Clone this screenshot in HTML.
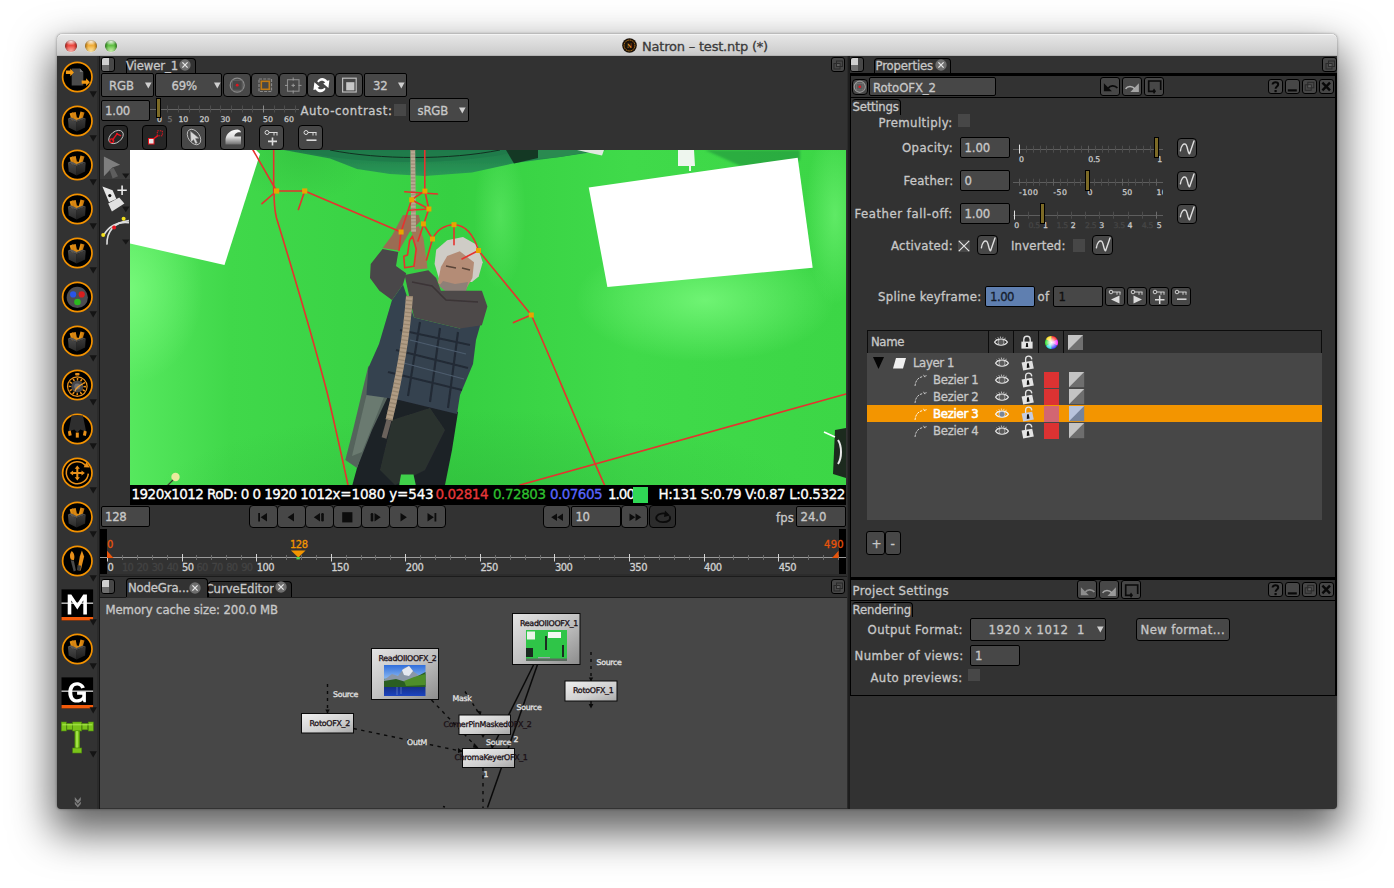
<!DOCTYPE html>
<html><head><meta charset="utf-8"><title>Natron - test.ntp (*)</title>
<style>
html,body{margin:0;padding:0;}
body{width:1394px;height:888px;overflow:hidden;background:#fff;position:relative;font-family:"DejaVu Sans Condensed","DejaVu Sans","Liberation Sans",sans-serif;font-stretch:condensed;font-size:13px;}
div,svg,span.t{position:absolute;}
span.t{white-space:pre;line-height:normal;-webkit-text-stroke:0.3px;}
svg{overflow:visible;}
.btn{background:#474747;border:1px solid #000;box-sizing:border-box;border-radius:3px;}
.btnd{background:#262626;border:1px solid #000;box-sizing:border-box;border-radius:3px;}
.fld{background:#474747;border:1px solid #000;box-sizing:border-box;border-radius:2px;}
.chk{background:#474747;}

</style></head>
<body>
<div style="left:57px;top:34px;width:1280px;height:775px;background:#323232;border-radius:5px 5px 4px 4px;box-shadow:0 19px 40px 5px rgba(0,0,0,0.62),0 0 3px rgba(0,0,0,0.4);"></div>
<div style="left:57px;top:34px;width:1280px;height:22px;background:linear-gradient(#e8e8e8 0%,#dfdfdf 30%,#d2d2d2 75%,#c8c8c8 100%);border-radius:5px 5px 0 0;border-bottom:1px solid #b4b4b4;box-sizing:border-box;box-shadow:inset 0 1px 0 #f4f4f4;"></div>
<div style="left:64.5px;top:39.6px;width:12px;height:12px;border-radius:6px;background:radial-gradient(ellipse 70% 45% at 50% 92%,#ffb0a8 0%,rgba(255,255,255,0) 100%),radial-gradient(ellipse 55% 30% at 50% 14%,rgba(255,255,255,0.85) 0%,rgba(255,255,255,0) 100%),radial-gradient(circle closest-side at 50% 50%,#ec4a42 0%,#ec4a42 50%,#b8322c 82%,#7e1f1c 100%);box-shadow:0 0.5px 0.5px rgba(255,255,255,0.6);"></div>
<div style="left:84.5px;top:39.6px;width:12px;height:12px;border-radius:6px;background:radial-gradient(ellipse 70% 45% at 50% 92%,#ffe7a0 0%,rgba(255,255,255,0) 100%),radial-gradient(ellipse 55% 30% at 50% 14%,rgba(255,255,255,0.85) 0%,rgba(255,255,255,0) 100%),radial-gradient(circle closest-side at 50% 50%,#f0ae3c 0%,#f0ae3c 50%,#c08422 82%,#8a5c14 100%);box-shadow:0 0.5px 0.5px rgba(255,255,255,0.6);"></div>
<div style="left:104.5px;top:39.6px;width:12px;height:12px;border-radius:6px;background:radial-gradient(ellipse 70% 45% at 50% 92%,#c8f2a8 0%,rgba(255,255,255,0) 100%),radial-gradient(ellipse 55% 30% at 50% 14%,rgba(255,255,255,0.85) 0%,rgba(255,255,255,0) 100%),radial-gradient(circle closest-side at 50% 50%,#62c046 0%,#62c046 50%,#3f922c 82%,#2a661c 100%);box-shadow:0 0.5px 0.5px rgba(255,255,255,0.6);"></div>
<svg style="left:622px;top:38px;" width="15" height="15" viewBox="0 0 15 15"><circle cx="7.5" cy="7.5" r="7.3" fill="#1a1008"/><circle cx="7.5" cy="7.5" r="5.4" fill="none" stroke="#c8821e" stroke-width="1" stroke-dasharray="1.2 0.6"/><text x="7.5" y="9.6" font-size="6" font-weight="bold" text-anchor="middle" fill="#e0942a" font-family="DejaVu Serif,Liberation Serif,serif">N</text></svg>
<span class="t" style="left:642px;top:38.60px;font-size:13px;color:#3a3a3a;font-family:'DejaVu Sans','Liberation Sans',sans-serif;font-stretch:normal;letter-spacing:-0.204px;">Natron – test.ntp (*)</span>
<div style="left:97px;top:56px;width:2px;height:753px;background:#2b2b2b;"></div>
<div style="left:99px;top:56px;width:1px;height:753px;background:#161616;"></div>
<div style="left:847px;top:56px;width:1px;height:753px;background:#2a2a2a;"></div>
<div style="left:848px;top:56px;width:1px;height:753px;background:#1e1e1e;"></div>
<div style="left:849px;top:56px;width:1px;height:753px;background:#1c1c1c;"></div>
<div style="left:101px;top:57px;width:14px;height:15.0px;background:#474747;border:1px solid #000;box-sizing:border-box;border-radius:3px;overflow:hidden;"><div style="left:0;top:0;width:6.5px;height:6.5px;background:#cfcfcf"></div><div style="left:0;top:6.5px;width:6.5px;height:7px;background:#6e6e6e"></div></div>
<div style="left:125.5px;top:57.5px;width:70.0px;height:16.5px;background:#323232;border:1px solid #000;border-bottom:none;box-sizing:border-box;border-radius:4px 4px 0 0;"></div>
<span class="t" style="left:126px;top:58.00px;font-size:13px;color:#c8c8c8;letter-spacing:-0.127px;">Viewer_1</span>
<svg style="left:179px;top:59px;" width="12" height="12" viewBox="0 0 12 12"><circle cx="6" cy="6" r="5.7" fill="#6e6e6e"/><path d="M3.4 3.4L8.6 8.6M8.6 3.4L3.4 8.6" stroke="#e6e6e6" stroke-width="1.3" fill="none"/></svg>
<div style="left:831px;top:57px;width:14px;height:15px;background:#474747;border:1px solid #000;box-sizing:border-box;border-radius:3px;"></div>
<svg style="left:831px;top:57.5px;" width="14" height="14" viewBox="0 0 14 14"><rect x="5.5" y="3" width="6" height="5.5" fill="none" stroke="#2a2a2a" stroke-width="1"/><rect x="3" y="5.5" width="6" height="5.5" fill="none" stroke="#2a2a2a" stroke-width="1"/><rect x="6" y="6" width="2.5" height="2" fill="#5e5e5e"/></svg>
<div style="left:101px;top:73px;width:53px;height:24px;background:#474747;border:1px solid #000;box-sizing:border-box;border-radius:2px;"></div>
<span class="t" style="left:109px;top:78.30px;font-size:13px;color:#c8c8c8;letter-spacing:-0.073px;">RGB</span>
<svg style="left:145px;top:82.3px;" width="7" height="7" viewBox="0 0 7 7"><path d="M0 0.5H6.6L3.3 6.4Z" fill="#d0d0d0"/></svg>
<div style="left:155px;top:73px;width:67px;height:24px;background:#474747;border:1px solid #000;box-sizing:border-box;border-radius:2px;"></div>
<span class="t" style="left:171.5px;top:78.30px;font-size:13px;color:#c8c8c8;letter-spacing:-0.167px;">69%</span>
<svg style="left:214px;top:82.3px;" width="7" height="7" viewBox="0 0 7 7"><path d="M0 0.5H6.6L3.3 6.4Z" fill="#d0d0d0"/></svg>
<div class="btn" style="left:223px;top:73px;width:28px;height:24px;border-radius:4px;"></div>
<div class="btn" style="left:251px;top:73px;width:28px;height:24px;border-radius:4px;"></div>
<div class="btn" style="left:279px;top:73px;width:28px;height:24px;border-radius:4px;"></div>
<div class="btn" style="left:307px;top:73px;width:28px;height:24px;border-radius:4px;"></div>
<div class="btn" style="left:335px;top:73px;width:28px;height:24px;border-radius:4px;"></div>
<div style="left:364px;top:73px;width:43px;height:24px;background:#474747;border:1px solid #000;box-sizing:border-box;border-radius:2px;"></div>
<span class="t" style="left:373px;top:78.30px;font-size:13px;color:#c8c8c8;letter-spacing:-0.195px;">32</span>
<svg style="left:398px;top:82.3px;" width="7" height="7" viewBox="0 0 7 7"><path d="M0 0.5H6.6L3.3 6.4Z" fill="#d0d0d0"/></svg>
<svg style="left:223.5px;top:73.8px;" width="26.5" height="22.5" viewBox="0 0 26.5 22.5"><circle cx="13.2" cy="11.2" r="7" fill="none" stroke="#8c8c8c" stroke-width="1.2"/><rect x="8.2" y="6.2" width="10" height="10" fill="none" stroke="#6a6a6a" stroke-width="0.8"/><circle cx="13.2" cy="11.2" r="1.4" fill="#e0141e"/></svg>
<svg style="left:251.5px;top:73.8px;" width="26.5" height="22.5" viewBox="0 0 26.5 22.5"><rect x="7" y="5" width="12.5" height="12.5" fill="none" stroke="#8a8a8a" stroke-width="1.2" stroke-dasharray="3 1.2"/><rect x="9.3" y="7.3" width="8" height="8" fill="none" stroke="#c27a12" stroke-width="1.6"/></svg>
<svg style="left:279.5px;top:73.8px;" width="26.5" height="22.5" viewBox="0 0 26.5 22.5"><rect x="7.5" y="5.7" width="11.5" height="11.5" fill="none" stroke="#8a8a8a" stroke-width="1.1"/><path d="M13.2 3.5V6.5M13.2 16.5V19.5M5 11.4H8M18.5 11.4H21.5M11.5 11.4H15M13.2 9.7V13.1" stroke="#9a9a9a" stroke-width="1" fill="none"/></svg>
<svg style="left:307.8px;top:73.8px;" width="26.5" height="22.5" viewBox="0 0 26.5 22.5"><g fill="#fff"><path id="rfa" d="M9.2 7.4C10.8 3.4 16.2 2.4 19.2 6.8L21.4 6.2L20.4 13.9L15.2 9.4L17.2 8.5C15.4 6.3 12.6 6.3 10.4 8.4Z"/><use href="#rfa" transform="rotate(180 13.4 11.1)"/></g></svg>
<svg style="left:335.8px;top:73.8px;" width="26.5" height="22.5" viewBox="0 0 26.5 22.5"><rect x="6.6" y="4.2" width="13.6" height="13.8" fill="none" stroke="#bdbdbd" stroke-width="1.2"/><rect x="10.2" y="8.2" width="8.2" height="8.2" fill="#c8c8c8"/></svg>
<div class="fld" style="left:101px;top:100px;width:49px;height:21px;"></div>
<span class="t" style="left:105px;top:103.00px;font-size:13px;color:#c8c8c8;letter-spacing:-0.262px;">1.00</span>
<div style="left:150px;top:109px;width:149px;height:1px;background:#666;"></div>
<svg style="left:0px;top:0px;pointer-events:none;" width="1394" height="888" viewBox="0 0 1394 888"><rect x="157" y="105.5" width="1" height="7.0" fill="#4c4c4c"/><rect x="167" y="105.5" width="1" height="7.0" fill="#4c4c4c"/><rect x="178" y="105.5" width="1" height="7.0" fill="#4c4c4c"/><rect x="189" y="105.5" width="1" height="7.0" fill="#4c4c4c"/><rect x="199" y="105.5" width="1" height="7.0" fill="#4c4c4c"/><rect x="210" y="105.5" width="1" height="7.0" fill="#4c4c4c"/><rect x="220" y="105.5" width="1" height="7.0" fill="#4c4c4c"/><rect x="231" y="105.5" width="1" height="7.0" fill="#4c4c4c"/><rect x="242" y="105.5" width="1" height="7.0" fill="#4c4c4c"/><rect x="252" y="105.5" width="1" height="7.0" fill="#4c4c4c"/><rect x="263" y="105.5" width="1" height="7.0" fill="#8a8a8a"/><rect x="274" y="105.5" width="1" height="7.0" fill="#4c4c4c"/><rect x="284" y="105.5" width="1" height="7.0" fill="#4c4c4c"/><rect x="295" y="105.5" width="1" height="7.0" fill="#4c4c4c"/></svg>
<span class="t" style="left:157px;top:114.90px;font-size:7.8px;color:#c8c8c8;font-family:'DejaVu Sans','Liberation Sans',sans-serif;font-stretch:normal;letter-spacing:-1.469px;">0</span>
<span class="t" style="left:167.5px;top:114.90px;font-size:7.8px;color:#6f6f6f;font-family:'DejaVu Sans','Liberation Sans',sans-serif;font-stretch:normal;letter-spacing:-1.469px;">5</span>
<span class="t" style="left:178.5px;top:114.90px;font-size:7.8px;color:#c8c8c8;font-family:'DejaVu Sans','Liberation Sans',sans-serif;font-stretch:normal;letter-spacing:-0.211px;">10</span>
<span class="t" style="left:199.5px;top:114.90px;font-size:7.8px;color:#c8c8c8;font-family:'DejaVu Sans','Liberation Sans',sans-serif;font-stretch:normal;letter-spacing:-0.211px;">20</span>
<span class="t" style="left:220.5px;top:114.90px;font-size:7.8px;color:#c8c8c8;font-family:'DejaVu Sans','Liberation Sans',sans-serif;font-stretch:normal;letter-spacing:-0.211px;">30</span>
<span class="t" style="left:242px;top:114.90px;font-size:7.8px;color:#c8c8c8;font-family:'DejaVu Sans','Liberation Sans',sans-serif;font-stretch:normal;letter-spacing:0.039px;">40</span>
<span class="t" style="left:263px;top:114.90px;font-size:7.8px;color:#c8c8c8;font-family:'DejaVu Sans','Liberation Sans',sans-serif;font-stretch:normal;letter-spacing:0.039px;">50</span>
<span class="t" style="left:284px;top:114.90px;font-size:7.8px;color:#c8c8c8;font-family:'DejaVu Sans','Liberation Sans',sans-serif;font-stretch:normal;letter-spacing:0.039px;">60</span>
<div style="left:156px;top:98px;width:5px;height:20px;background:#7c6a26;border:1px solid #000;box-sizing:border-box;"></div>
<span class="t" style="left:300.5px;top:103.00px;font-size:13px;color:#c8c8c8;letter-spacing:0.586px;">Auto-contrast:</span>
<div style="left:394px;top:104px;width:12px;height:12px;background:#474747;"></div>
<div style="left:409px;top:98px;width:60px;height:24px;background:#474747;border:1px solid #000;box-sizing:border-box;border-radius:2px;"></div>
<span class="t" style="left:417.5px;top:102.80px;font-size:13px;color:#c8c8c8;letter-spacing:-0.203px;">sRGB</span>
<svg style="left:459px;top:106.8px;" width="7" height="7" viewBox="0 0 7 7"><path d="M0 0.5H6.6L3.3 6.4Z" fill="#d0d0d0"/></svg>
<div class="btnd" style="left:103px;top:125px;width:25px;height:25px;border-radius:4px;"></div>
<div class="btnd" style="left:142px;top:125px;width:25px;height:25px;border-radius:4px;"></div>
<div class="btn" style="left:181px;top:125px;width:25px;height:25px;border-radius:4px;"></div>
<div class="btn" style="left:220px;top:125px;width:25px;height:25px;border-radius:4px;"></div>
<div class="btn" style="left:259px;top:125px;width:25px;height:25px;border-radius:4px;"></div>
<div class="btn" style="left:298px;top:125px;width:25px;height:25px;border-radius:4px;"></div>
<svg style="left:103.5px;top:125px;" width="24" height="24.5" viewBox="0 0 24 24.5"><ellipse cx="12" cy="12" rx="8.2" ry="5.4" transform="rotate(-38 12 12)" fill="none" stroke="#c8c8c8" stroke-width="0.9"/><path d="M8.2 15.5L13 8.8L17 10.8" stroke="#e8141e" stroke-width="1.3" fill="none"/><circle cx="7.8" cy="15.8" r="1.9" fill="none" stroke="#e8141e" stroke-width="1.2"/><circle cx="13" cy="8.8" r="1" fill="#e8141e"/></svg>
<svg style="left:142.5px;top:125px;" width="24" height="24.5" viewBox="0 0 24 24.5"><rect x="5.5" y="13.5" width="5.5" height="5.5" fill="#e6e6e6" stroke="#e8141e" stroke-width="1"/><path d="M11 13.5L14.8 10.6" stroke="#e8141e" stroke-width="1.4"/><rect x="14.3" y="5.8" width="5" height="5" fill="none" stroke="#e8141e" stroke-width="1" stroke-dasharray="1.5 1"/></svg>
<svg style="left:181.5px;top:125px;" width="24" height="24.5" viewBox="0 0 24 24.5"><ellipse cx="12" cy="12" rx="8.6" ry="5.6" transform="rotate(55 12 12)" fill="none" stroke="#bdbdbd" stroke-width="0.9"/><path d="M8.4 6.2L17 13.2L13.4 13.6L15.4 18L13.6 18.8L11.6 14.6L9 17Z" fill="#d8d8d8" stroke="#8a8a8a" stroke-width="0.5"/></svg>
<svg style="left:220.5px;top:125px;" width="24" height="24.5" viewBox="0 0 24 24.5"><defs><linearGradient id="wv" x1="0" y1="0" x2="0" y2="1"><stop offset="0" stop-color="#fafafa"/><stop offset="0.5" stop-color="#dedede"/><stop offset="1" stop-color="#6e6e6e"/></linearGradient></defs><path d="M4.5 19.5V14C5.5 8.5 10 4.6 16.5 4.6C19 5.2 20 6.4 20 7.4C16.5 6.6 13.4 8.6 13.4 11.4C14.4 11.6 17 11.4 20 11.4V19.5Z" fill="url(#wv)"/></svg>
<svg style="left:259.5px;top:125px;" width="24" height="24.5" viewBox="0 0 24 24.5"><circle cx="7" cy="7.5" r="2" fill="none" stroke="#dcdcdc" stroke-width="1"/><path d="M9 7.5H17.5M14 7.5V10.5M17 7.5V10.5" stroke="#dcdcdc" stroke-width="1" fill="none"/><path d="M8 16.4H17M12.5 12.6V20.4" stroke="#dcdcdc" stroke-width="1.6" fill="none"/></svg>
<svg style="left:298.5px;top:125px;" width="24" height="24.5" viewBox="0 0 24 24.5"><circle cx="7" cy="7.5" r="2" fill="none" stroke="#dcdcdc" stroke-width="1"/><path d="M9 7.5H17.5M14 7.5V10.5M17 7.5V10.5" stroke="#dcdcdc" stroke-width="1" fill="none"/><path d="M7.5 15.2H17.5" stroke="#dcdcdc" stroke-width="1.6" fill="none"/></svg>
<div style="left:100px;top:150px;width:30px;height:29px;background:#3d3d3d;"></div>
<svg style="left:0px;top:0px;" width="1394" height="888" viewBox="0 0 1394 888"><path d="M103.9 156.6L120.2 164.8L112.4 167.4L103.9 176.3Z" fill="#7e7e7e"/><path d="M109.6 169.6L113.6 167.8L118 176.2L112.6 178.6Z" fill="#5e5e5e"/>
<path d="M122.1 173.4H129.5L125.8 178.6Z" fill="#161616"/>
<path d="M102.4 186.4L112.6 190.2L116.4 199L109 202.2Z" fill="#e6e6e6"/><circle cx="109.8" cy="195.6" r="1.6" fill="#111"/><path d="M108.2 203.6L119.2 197.6L124.4 203.6L111.9 211.6Z" fill="#e0e0e0"/>
<path d="M117.4 190.2H126.8M122.1 185.5V194.9" stroke="#ececec" stroke-width="1.6" fill="none"/>
<path d="M122.1 206.4H129.5L125.8 212.2Z" fill="#161616"/>
<path d="M103.6 235.6C108 227 117 221 129 222.6" stroke="#dedede" stroke-width="1.6" fill="none"/><path d="M107 244.6C106.4 232 114 222 129 220.6" stroke="#dedede" stroke-width="1.6" fill="none"/>
<circle cx="123.6" cy="218.8" r="2" fill="#f3e11e"/><circle cx="103.2" cy="235" r="2" fill="#f3e11e"/><circle cx="114.1" cy="227.6" r="2" fill="#e8141e"/>
<path d="M122.1 239.4H129.5L125.8 244.6Z" fill="#161616"/></svg>
<svg style="left:0px;top:0px;" width="1394" height="888" viewBox="0 0 1394 888"><defs>
<clipPath id="phc"><rect x="130" y="150" width="716" height="335"/></clipPath>
<linearGradient id="gbase" x1="0" y1="0" x2="1" y2="0"><stop offset="0" stop-color="#56e85e"/><stop offset="0.14" stop-color="#40d84a"/><stop offset="0.45" stop-color="#36d042"/><stop offset="0.7" stop-color="#40da4a"/><stop offset="1" stop-color="#3cd646"/></linearGradient>
<radialGradient id="gglow" cx="0.5" cy="0.5" r="0.5"><stop offset="0" stop-color="#84ff86" stop-opacity="0.7"/><stop offset="1" stop-color="#84ff86" stop-opacity="0"/></radialGradient>
<radialGradient id="gdark" cx="0.5" cy="0.5" r="0.5"><stop offset="0" stop-color="#2cb03a" stop-opacity="0.45"/><stop offset="1" stop-color="#2cb03a" stop-opacity="0"/></radialGradient>
<linearGradient id="canopy" x1="0" y1="0" x2="0" y2="1"><stop offset="0" stop-color="#1f7a4a"/><stop offset="1" stop-color="#2a9a56"/></linearGradient>
<filter id="bl2"><feGaussianBlur stdDeviation="1.2"/></filter>
<filter id="bl1"><feGaussianBlur stdDeviation="0.6"/></filter>
</defs>
<g clip-path="url(#phc)">
<rect x="130" y="150" width="716" height="335" fill="url(#gbase)"/>
<ellipse cx="705" cy="300" rx="130" ry="62" fill="url(#gglow)"/>
<ellipse cx="128" cy="290" rx="75" ry="95" fill="url(#gglow)"/>
<ellipse cx="480" cy="500" rx="330" ry="90" fill="url(#gdark)"/>
<ellipse cx="500" cy="215" rx="26" ry="75" fill="url(#gglow)" opacity="0.45"/>
<ellipse cx="300" cy="148" rx="75" ry="55" fill="url(#gdark)" opacity="0.9"/>
<!-- canopy -->
<path d="M284 150L330 158.5L357 169L390 174L425 176L472 172.5L515 163L560 157L606 150Z" fill="url(#canopy)" filter="url(#bl1)"/>
<path d="M300 150C350 166 470 166 520 150Z" fill="#1f7a4a" opacity="0.85"/>
<path d="M330 150C380 160 450 160 500 150" fill="none" stroke="#10281c" stroke-width="0.9"/>
<path d="M506 150L540 150L538 158L514 163.5Z" fill="#143824"/>
<path d="M538 150H600L560 157L538 159Z" fill="#2a8a50"/>
<path d="M577 150L604 150L602 155.5L590 153Z" fill="#dfe9df"/>
<path d="M705 150H800V160L745 168Z" fill="#1f8a3a" opacity="0.55" filter="url(#bl2)"/>
<ellipse cx="835" cy="215" rx="30" ry="90" fill="url(#gglow)" opacity="0.7"/>
<!-- white boards -->
<path d="M130 150H256L260 154L224.5 265L130 243.5Z" fill="#fff"/>
<path d="M588.7 187.4L797.7 157.8L812.7 267.8L607.4 287Z" fill="#fff"/>
<path d="M678 150H694L695 166H691V171H689V166H678Z" fill="#eef6ee"/>
<!-- right bottom dark object -->
<path d="M835 430L846 428V478L833 474Z" fill="#1c2a1e"/><path d="M824 432L835 437" stroke="#fff" stroke-width="1.6"/><path d="M838 440C842 446 842 458 838 464" stroke="#e8e8e8" stroke-width="2" fill="none"/>
<circle cx="175.5" cy="477" r="4.2" fill="#e9ea9c"/><path d="M165 488L173 480" stroke="#3a3a2a" stroke-width="1.2"/>
<!-- man -->
<g filter="url(#bl1)">
<!-- trousers / legs -->
<path d="M372 392L395 396L458 412L452 450L444 490H351L357 468L366 440Z" fill="#1d2128"/>
<path d="M392 420L430 408L445 430L425 470L395 485L380 470Z" fill="#2c332f"/>
<!-- coat flap -->
<path d="M368.3 366L391 390L372 430L357 468L345.3 460L353 430Z" fill="#55645c"/>
<path d="M372 372L386 392L362 452L352 456Z" fill="#6a7a70"/>
<!-- plaid shirt -->
<path d="M392 300L403 284.4L414 317.5L459.8 328.5L484 312L476 340L473 364L460 395L457 414L395 399L366.4 395L368.3 368L379 344Z" fill="#36424f"/>
<path d="M400 330L470 345M396 350L468 368M388 372L462 390M420 322L408 396M440 328L430 402M458 332L448 408" stroke="#222b36" stroke-width="2.2" fill="none"/>
<path d="M410 340L466 354M400 362L464 379" stroke="#4d5d6e" stroke-width="1.2" fill="none"/>
<!-- left sleeve -->
<path d="M382.6 248.9L398.3 252L396 266L406.2 273.3L403 284.4L392 300.1L379.4 290.7L370 278L370.7 263.9Z" fill="#4a4648"/>
<!-- left forearm -->
<path d="M403 215H418.8L420.4 221.3L409.4 232.3L399.1 250.5L382.6 248.1L392 235.5Z" fill="#9a6c52"/>
<!-- right forearm / hand -->
<path d="M410.9 229.2L418.8 226L423.5 238.6L427.5 268.6L414.1 269.4L415.7 246.5Z" fill="#a47458"/>
<!-- head -->
<path d="M434.6 263.9L436.2 249.7L447.2 240.2L463 237.1L477.1 245L482.7 262.3L478.7 276.5L472 282L440 282Z" fill="#cfccc6"/>
<path d="M440.9 267L447.2 256L459.8 251.3L474 262.3L472.4 278L466.1 289.1L447.2 290.7L437.7 282.8Z" fill="#b48c76"/>
<path d="M443 281L455 284L468 282L466.1 291L447.2 292.5L439 286Z" fill="#8e8078"/>
<path d="M446 266L456 268M462 268L470 270" stroke="#5a4438" stroke-width="1.3"/>
<!-- right sleeve across -->
<path d="M404.6 274.9L428.3 270.2L436.2 278L440.9 290.7L481.9 290.7L487.4 306.4L481.9 325.3L459.8 328.5L414.1 317.5L409.4 297Z" fill="#4e484a"/>
<path d="M412 282L432 286L446 300L478 302" stroke="#3a3436" stroke-width="1.6" fill="none"/>
</g>
<!-- rope -->
<path d="M412.8 150L413.6 232" stroke="#b9a892" stroke-width="4.8" fill="none"/>
<path d="M412.8 150L413.6 232" stroke="#8d7c68" stroke-width="4.8" fill="none" stroke-dasharray="1.2 2.2" opacity="0.6"/>
<path d="M409.5 296C407 330 400 375 389 420" stroke="#b09c84" stroke-width="7" fill="none"/>
<path d="M409.5 296C407 330 400 375 389 420" stroke="#85745f" stroke-width="7" fill="none" stroke-dasharray="1.4 2.6" opacity="0.55"/>
<path d="M389 420L384 438" stroke="#6a625c" stroke-width="5" fill="none"/>
<path d="M401 474.5L413.5 474.5L416 486H399Z" fill="#3fd04a"/>
<!-- roto splines -->
<g stroke="#e6322e" stroke-width="1.6" fill="none" stroke-linecap="round" stroke-linejoin="round">
<path d="M253 150L276.6 191"/><path d="M273.7 150V191"/><path d="M274 191C274 205 275 212 276.5 218C290 262 312 335 327 392C335 425 343 462 348 485"/>
<path d="M276.6 191H304.7"/><path d="M276.6 191L262 203.7"/><path d="M304.7 191L298.4 209.5"/>
<path d="M304.7 191L401 232"/><path d="M401 232L399 250.5"/><path d="M401 232L411.6 199.7"/>
<path d="M424.8 150V191"/><path d="M404.7 191.7L437.4 194"/><path d="M411.6 199.7L428.8 209"/><path d="M408.8 210.3L428.8 209"/><path d="M411.6 199.7L424.8 191L428.8 209L418 241"/>
<path d="M423.3 223.8L432.5 239L426.5 260"/>
<path d="M412.4 236.2L416.2 249L413.9 266.3L404.7 267.8L403.8 256.3L407.5 254.9L409.6 240.5Z"/>
<path d="M432.5 239C437 229 446 224.7 454 224.7C466 225 474 236 478.5 250.5"/><path d="M454 224.7V244.8"/><path d="M478.5 250.5L462 259"/>
<path d="M478.5 250.5L531.3 315"/><path d="M531.3 315L513.5 322.6"/><path d="M531.3 315C545 345 580 430 604.5 485"/>
<path d="M520 485L846 394"/>
</g>
<g fill="#e8a400">
<rect x="274" y="188.4" width="5.2" height="5.2"/><rect x="302.1" y="188.4" width="5.2" height="5.2"/><rect x="398.6" y="229.5" width="5" height="5"/><rect x="409.2" y="197.3" width="5" height="5"/><rect x="422.4" y="188.6" width="5" height="5"/><rect x="426.4" y="206.5" width="5" height="5"/><rect x="420.9" y="221.4" width="5" height="5"/><rect x="430" y="236.5" width="5" height="5"/><rect x="451.5" y="222.2" width="5" height="5"/><rect x="476" y="248" width="5" height="5"/><rect x="528.8" y="312.5" width="5" height="5"/>
</g>
</g></svg>
<div style="left:130px;top:485px;width:716px;height:20px;background:#000;"></div>
<span class="t" style="left:131.5px;top:486.40px;font-size:13.5px;color:#fff;font-family:'DejaVu Sans','Liberation Sans',sans-serif;font-stretch:normal;letter-spacing:-0.537px;">1920x1012 RoD: 0 0 1920 1012</span>
<span class="t" style="left:332.5px;top:486.40px;font-size:13.5px;color:#fff;font-family:'DejaVu Sans','Liberation Sans',sans-serif;font-stretch:normal;letter-spacing:-0.169px;">x=1080 y=543</span>
<span class="t" style="left:435.5px;top:486.40px;font-size:13.5px;color:#e8383a;font-family:'DejaVu Sans','Liberation Sans',sans-serif;font-stretch:normal;letter-spacing:-0.475px;">0.02814</span>
<span class="t" style="left:493px;top:486.40px;font-size:13.5px;color:#2fc02f;font-family:'DejaVu Sans','Liberation Sans',sans-serif;font-stretch:normal;letter-spacing:-0.475px;">0.72803</span>
<span class="t" style="left:550px;top:486.40px;font-size:13.5px;color:#5a66ff;font-family:'DejaVu Sans','Liberation Sans',sans-serif;font-stretch:normal;letter-spacing:-0.547px;">0.07605</span>
<span class="t" style="left:608px;top:486.40px;font-size:13.5px;color:#fff;font-family:'DejaVu Sans','Liberation Sans',sans-serif;font-stretch:normal;letter-spacing:-1.016px;">1.00</span>
<div style="left:633px;top:487px;width:15px;height:16px;background:#2fd855;"></div>
<span class="t" style="left:658.5px;top:486.40px;font-size:13.5px;color:#fff;font-family:'DejaVu Sans','Liberation Sans',sans-serif;font-stretch:normal;letter-spacing:-0.431px;">H:131 S:0.79 V:0.87 L:0.5322</span>
<div class="fld" style="left:101px;top:506px;width:49px;height:21px;"></div>
<span class="t" style="left:105px;top:509.00px;font-size:13px;color:#c8c8c8;letter-spacing:-0.276px;">128</span>
<div class="btn" style="left:249px;top:505px;width:29px;height:23px;border-radius:4px;"></div>
<div class="btn" style="left:277px;top:505px;width:29px;height:23px;border-radius:4px;"></div>
<div class="btn" style="left:305px;top:505px;width:29px;height:23px;border-radius:4px;"></div>
<div class="btn" style="left:333px;top:505px;width:29px;height:23px;border-radius:4px;"></div>
<div class="btn" style="left:361px;top:505px;width:29px;height:23px;border-radius:4px;"></div>
<div class="btn" style="left:389px;top:505px;width:29px;height:23px;border-radius:4px;"></div>
<div class="btn" style="left:417px;top:505px;width:29px;height:23px;border-radius:4px;"></div>
<svg style="left:250.1px;top:505.5px;" width="26.5" height="22.5" viewBox="0 0 26.5 22.5"><rect x="8.2" y="7" width="1.8" height="8.5" fill="#0c0c0c"/><path d="M17 7V15.5L10.6 11.25Z" fill="#0c0c0c"/></svg>
<svg style="left:278.1px;top:505.5px;" width="26.5" height="22.5" viewBox="0 0 26.5 22.5"><path d="M16 7V15.5L9.6 11.25Z" fill="#0c0c0c"/></svg>
<svg style="left:306.1px;top:505.5px;" width="26.5" height="22.5" viewBox="0 0 26.5 22.5"><path d="M14 7V15.5L7.8 11.25Z" fill="#0c0c0c"/><rect x="15.2" y="7" width="2.6" height="8.5" rx="1.2" fill="#0c0c0c"/></svg>
<svg style="left:334.1px;top:505.5px;" width="26.5" height="22.5" viewBox="0 0 26.5 22.5"><rect x="8.2" y="6.2" width="10.2" height="10.2" fill="#0c0c0c"/></svg>
<svg style="left:362.1px;top:505.5px;" width="26.5" height="22.5" viewBox="0 0 26.5 22.5"><path d="M12.5 7V15.5L18.7 11.25Z" fill="#0c0c0c"/><rect x="8.7" y="7" width="2.6" height="8.5" rx="1.2" fill="#0c0c0c"/></svg>
<svg style="left:390.1px;top:505.5px;" width="26.5" height="22.5" viewBox="0 0 26.5 22.5"><path d="M10.5 7V15.5L16.9 11.25Z" fill="#0c0c0c"/></svg>
<svg style="left:418.1px;top:505.5px;" width="26.5" height="22.5" viewBox="0 0 26.5 22.5"><rect x="16.5" y="7" width="1.8" height="8.5" fill="#0c0c0c"/><path d="M9.5 7V15.5L15.9 11.25Z" fill="#0c0c0c"/></svg>
<div class="btn" style="left:543px;top:505px;width:27px;height:23px;border-radius:4px;"></div>
<div class="fld" style="left:571px;top:506px;width:50px;height:21px;"></div>
<div class="btn" style="left:621px;top:505px;width:27px;height:23px;border-radius:4px;"></div>
<div style="left:649px;top:505px;width:27px;height:23px;background:#2c2c2c;border:1px solid #000;box-sizing:border-box;border-radius:4px;"></div>
<span class="t" style="left:575.5px;top:509.00px;font-size:13px;color:#c8c8c8;letter-spacing:-0.445px;">10</span>
<svg style="left:543.5px;top:505.5px;" width="26.5" height="22.5" viewBox="0 0 26.5 22.5"><path d="M13 7.5V15L7.2 11.25Z" fill="#0c0c0c"/><path d="M19 7.5V15L13.2 11.25Z" fill="#0c0c0c"/></svg>
<svg style="left:621.5px;top:505.5px;" width="26.5" height="22.5" viewBox="0 0 26.5 22.5"><path d="M7.5 7.5V15L13.3 11.25Z" fill="#0c0c0c"/><path d="M13.5 7.5V15L19.3 11.25Z" fill="#0c0c0c"/></svg>
<svg style="left:649.5px;top:505.5px;" width="26.5" height="22.5" viewBox="0 0 26.5 22.5"><path d="M17.5 8.6C14 6.6 8.5 7.2 6.6 10.4C5.2 13.4 8 16.2 13 16.2C18.4 16.2 21.4 13.6 19.6 10.2" stroke="#0a0a0a" stroke-width="1.8" fill="none"/><path d="M15 4.6L20 9.6L14 11Z" fill="#0a0a0a"/></svg>
<span class="t" style="left:776px;top:509.50px;font-size:13px;color:#c8c8c8;letter-spacing:0.120px;">fps</span>
<div class="fld" style="left:796px;top:506px;width:50px;height:21px;"></div>
<span class="t" style="left:800.5px;top:509.00px;font-size:13px;color:#c8c8c8;letter-spacing:-0.012px;">24.0</span>
<div style="left:100px;top:529px;width:7px;height:45px;background:#000;"></div>
<div style="left:839px;top:529px;width:7px;height:45px;background:#000;"></div>
<svg style="left:0px;top:0px;" width="1394" height="888" viewBox="0 0 1394 888"><rect x="100" y="557" width="746" height="1" fill="#9a9a9a"/><rect x="107" y="554" width="1" height="7.5" fill="#d4d4d4"/><rect x="122" y="555" width="1" height="5" fill="#6a6a6a"/><rect x="137" y="555" width="1" height="5" fill="#6a6a6a"/><rect x="152" y="555" width="1" height="5" fill="#6a6a6a"/><rect x="167" y="555" width="1" height="5" fill="#6a6a6a"/><rect x="182" y="554" width="1" height="7.5" fill="#d4d4d4"/><rect x="196" y="555" width="1" height="5" fill="#6a6a6a"/><rect x="211" y="555" width="1" height="5" fill="#6a6a6a"/><rect x="226" y="555" width="1" height="5" fill="#6a6a6a"/><rect x="241" y="555" width="1" height="5" fill="#6a6a6a"/><rect x="256" y="554" width="1" height="7.5" fill="#d4d4d4"/><rect x="271" y="555" width="1" height="5" fill="#6a6a6a"/><rect x="286" y="555" width="1" height="5" fill="#6a6a6a"/><rect x="301" y="555" width="1" height="5" fill="#6a6a6a"/><rect x="316" y="555" width="1" height="5" fill="#6a6a6a"/><rect x="331" y="554" width="1" height="7.5" fill="#d4d4d4"/><rect x="346" y="555" width="1" height="5" fill="#6a6a6a"/><rect x="361" y="555" width="1" height="5" fill="#6a6a6a"/><rect x="375" y="555" width="1" height="5" fill="#6a6a6a"/><rect x="390" y="555" width="1" height="5" fill="#6a6a6a"/><rect x="405" y="554" width="1" height="7.5" fill="#d4d4d4"/><rect x="420" y="555" width="1" height="5" fill="#6a6a6a"/><rect x="435" y="555" width="1" height="5" fill="#6a6a6a"/><rect x="450" y="555" width="1" height="5" fill="#6a6a6a"/><rect x="465" y="555" width="1" height="5" fill="#6a6a6a"/><rect x="480" y="554" width="1" height="7.5" fill="#d4d4d4"/><rect x="495" y="555" width="1" height="5" fill="#6a6a6a"/><rect x="510" y="555" width="1" height="5" fill="#6a6a6a"/><rect x="525" y="555" width="1" height="5" fill="#6a6a6a"/><rect x="540" y="555" width="1" height="5" fill="#6a6a6a"/><rect x="554" y="554" width="1" height="7.5" fill="#d4d4d4"/><rect x="569" y="555" width="1" height="5" fill="#6a6a6a"/><rect x="584" y="555" width="1" height="5" fill="#6a6a6a"/><rect x="599" y="555" width="1" height="5" fill="#6a6a6a"/><rect x="614" y="555" width="1" height="5" fill="#6a6a6a"/><rect x="629" y="554" width="1" height="7.5" fill="#d4d4d4"/><rect x="644" y="555" width="1" height="5" fill="#6a6a6a"/><rect x="659" y="555" width="1" height="5" fill="#6a6a6a"/><rect x="674" y="555" width="1" height="5" fill="#6a6a6a"/><rect x="689" y="555" width="1" height="5" fill="#6a6a6a"/><rect x="704" y="554" width="1" height="7.5" fill="#d4d4d4"/><rect x="719" y="555" width="1" height="5" fill="#6a6a6a"/><rect x="733" y="555" width="1" height="5" fill="#6a6a6a"/><rect x="748" y="555" width="1" height="5" fill="#6a6a6a"/><rect x="763" y="555" width="1" height="5" fill="#6a6a6a"/><rect x="778" y="554" width="1" height="7.5" fill="#d4d4d4"/><rect x="793" y="555" width="1" height="5" fill="#6a6a6a"/><rect x="808" y="555" width="1" height="5" fill="#6a6a6a"/><rect x="823" y="555" width="1" height="5" fill="#6a6a6a"/><rect x="838" y="555" width="1" height="5" fill="#6a6a6a"/><path d="M107 558V550.8L113.6 558Z" fill="#e8540a"/><path d="M838.6 558V550.8L832 558Z" fill="#e8540a"/><path d="M291 550.5H305.6L298.3 557.6Z" fill="#f39500"/><rect x="296.4" y="557" width="3.4" height="2.4" fill="#4fd04f"/></svg>
<span class="t" style="left:107px;top:537.50px;font-size:11px;color:#e8540a;letter-spacing:-1.297px;">0</span>
<span class="t" style="left:290px;top:537.50px;font-size:11px;color:#f39500;letter-spacing:-0.464px;">128</span>
<span class="t" style="left:824px;top:537.50px;font-size:11px;color:#e8540a;letter-spacing:0.370px;">490</span>
<span class="t" style="left:107.5px;top:561.00px;font-size:11px;color:#d0d0d0;letter-spacing:-0.797px;">0</span>
<span class="t" style="left:121.915px;top:561.00px;font-size:11px;color:#434343;letter-spacing:-0.797px;">10</span>
<span class="t" style="left:136.83px;top:561.00px;font-size:11px;color:#434343;letter-spacing:-0.797px;">20</span>
<span class="t" style="left:151.745px;top:561.00px;font-size:11px;color:#434343;letter-spacing:-0.797px;">30</span>
<span class="t" style="left:166.66px;top:561.00px;font-size:11px;color:#434343;letter-spacing:-0.797px;">40</span>
<span class="t" style="left:182.075px;top:561.00px;font-size:11px;color:#d0d0d0;letter-spacing:-0.547px;">50</span>
<span class="t" style="left:196.49px;top:561.00px;font-size:11px;color:#434343;letter-spacing:-0.797px;">60</span>
<span class="t" style="left:211.405px;top:561.00px;font-size:11px;color:#434343;letter-spacing:-0.797px;">70</span>
<span class="t" style="left:226.32px;top:561.00px;font-size:11px;color:#434343;letter-spacing:-0.797px;">80</span>
<span class="t" style="left:241.235px;top:561.00px;font-size:11px;color:#434343;letter-spacing:-0.797px;">90</span>
<span class="t" style="left:256.65px;top:561.00px;font-size:11px;color:#d0d0d0;letter-spacing:-0.464px;">100</span>
<span class="t" style="left:331.225px;top:561.00px;font-size:11px;color:#d0d0d0;letter-spacing:-0.464px;">150</span>
<span class="t" style="left:405.8px;top:561.00px;font-size:11px;color:#d0d0d0;letter-spacing:-0.464px;">200</span>
<span class="t" style="left:480.375px;top:561.00px;font-size:11px;color:#d0d0d0;letter-spacing:-0.464px;">250</span>
<span class="t" style="left:554.95px;top:561.00px;font-size:11px;color:#d0d0d0;letter-spacing:-0.464px;">300</span>
<span class="t" style="left:629.525px;top:561.00px;font-size:11px;color:#d0d0d0;letter-spacing:-0.464px;">350</span>
<span class="t" style="left:704.1px;top:561.00px;font-size:11px;color:#d0d0d0;letter-spacing:-0.464px;">400</span>
<span class="t" style="left:778.6750000000001px;top:561.00px;font-size:11px;color:#d0d0d0;letter-spacing:-0.464px;">450</span>
<div style="left:100px;top:574px;width:747px;height:2px;background:#2c2c2c;"></div>
<div style="left:100px;top:576px;width:747px;height:1px;background:#1c1c1c;"></div>
<div style="left:101px;top:579px;width:14px;height:15px;background:#474747;border:1px solid #000;box-sizing:border-box;border-radius:3px;overflow:hidden;"><div style="left:0;top:0;width:6.5px;height:6.5px;background:#cfcfcf"></div><div style="left:0;top:6.5px;width:6.5px;height:7px;background:#6e6e6e"></div></div>
<div style="left:125.5px;top:578px;width:82.5px;height:20px;background:#323232;border:1px solid #000;border-bottom:none;box-sizing:border-box;border-radius:4px 4px 0 0;"></div>
<div style="left:208px;top:580.5px;width:83.5px;height:17.5px;background:#2b2b2b;border:1px solid #000;border-bottom:none;box-sizing:border-box;border-radius:4px 4px 0 0;"></div>
<span class="t" style="left:128px;top:580.00px;font-size:13px;color:#c8c8c8;letter-spacing:-0.170px;">NodeGra...</span>
<svg style="left:189px;top:581.5px;" width="12" height="12" viewBox="0 0 12 12"><circle cx="6" cy="6" r="5.7" fill="#6e6e6e"/><path d="M3.4 3.4L8.6 8.6M8.6 3.4L3.4 8.6" stroke="#e6e6e6" stroke-width="1.3" fill="none"/></svg>
<span class="t" style="left:205.5px;top:581.00px;font-size:13px;color:#c8c8c8;letter-spacing:-0.057px;clip-path:inset(0 0 0 3px);">CurveEditor</span>
<svg style="left:275px;top:581px;" width="12" height="12" viewBox="0 0 12 12"><circle cx="6" cy="6" r="5.7" fill="#6e6e6e"/><path d="M3.4 3.4L8.6 8.6M8.6 3.4L3.4 8.6" stroke="#e6e6e6" stroke-width="1.3" fill="none"/></svg>
<div style="left:831px;top:579px;width:14px;height:15px;background:#474747;border:1px solid #000;box-sizing:border-box;border-radius:3px;"></div>
<svg style="left:831px;top:579.5px;" width="14" height="14" viewBox="0 0 14 14"><rect x="5.5" y="3" width="6" height="5.5" fill="none" stroke="#2a2a2a" stroke-width="1"/><rect x="3" y="5.5" width="6" height="5.5" fill="none" stroke="#2a2a2a" stroke-width="1"/><rect x="6" y="6" width="2.5" height="2" fill="#5e5e5e"/></svg>
<div style="left:100px;top:597px;width:747px;height:1px;background:#1a1a1a;"></div>
<div style="left:126px;top:597px;width:81px;height:1px;background:#323232;"></div>
<div style="left:100px;top:598px;width:747px;height:210px;background:#474747;"></div>
<span class="t" style="left:105.5px;top:602.00px;font-size:13px;color:#c8c8c8;letter-spacing:-0.102px;">Memory cache size: 200.0 MB</span>
<svg style="left:0px;top:0px;" width="1394" height="888" viewBox="0 0 1394 888"><defs><linearGradient id="ndg" x1="0" y1="0" x2="1" y2="1"><stop offset="0" stop-color="#e4e4e4"/><stop offset="0.5" stop-color="#c2c2c2"/><stop offset="1" stop-color="#8c8c8c"/></linearGradient>
<linearGradient id="ndg2" x1="0" y1="0" x2="1" y2="1"><stop offset="0" stop-color="#f0f0f0"/><stop offset="0.6" stop-color="#cfcfcf"/><stop offset="1" stop-color="#a8a8a8"/></linearGradient>
<clipPath id="ngc"><rect x="100" y="598" width="747" height="210"/></clipPath>
<linearGradient id="sky" x1="0" y1="0" x2="0" y2="1"><stop offset="0" stop-color="#2f6edc"/><stop offset="0.42" stop-color="#86b4f0"/><stop offset="0.5" stop-color="#4a7a3a"/><stop offset="0.68" stop-color="#2f6a2a"/><stop offset="0.72" stop-color="#16308a"/><stop offset="1" stop-color="#1c44c0"/></linearGradient>
</defs>
<g clip-path="url(#ngc)">
<g stroke="#0a0a0a" stroke-width="1.4" fill="none">
<path d="M327.5 684V713" stroke-dasharray="3 4"/>
<path d="M353.5 728.5L462.5 751.5" stroke-dasharray="3.4 4.4"/>
<path d="M431.5 700L477.5 748" stroke-dasharray="3.4 4.4"/>
<path d="M465 691.5L480 715" stroke-dasharray="3 4"/>
<path d="M591 652V681" stroke-dasharray="3 4"/>
<path d="M591 701V706"/>
<path d="M483 767.5V808" stroke-dasharray="3.4 4.4"/>
<path d="M533.75 664.5L492 748.5" stroke-width="1.5"/>
<path d="M537.5 664.5L487.5 807.5" stroke-width="1.5"/>
<path d="M443 806.5L445 807" />
</g>
<g fill="#0a0a0a"><path d="M325.3 709.5H329.7L327.5 713.5Z"/><path d="M588.8 677.5H593.2L591 681.5Z"/><path d="M588.6 704H593.4L591 708.5Z"/><path d="M476 710.5L481.5 711.5L480.5 715.5Z"/><path d="M458 748L463 751.5L458 753Z"/><path d="M474 743L479 748.5L473 747.5Z"/><path d="M490 744L494.5 744.5L492 748.8Z"/><path d="M481 734.5H485L483 738Z"/></g>
<!-- nodes -->
<rect x="512.5" y="613.5" width="67.5" height="51" fill="url(#ndg)" stroke="#0a0a0a" stroke-width="1"/>
<rect x="371.5" y="648.5" width="67" height="51" fill="url(#ndg)" stroke="#0a0a0a" stroke-width="1"/>
<rect x="301.5" y="713.5" width="52" height="19.5" fill="url(#ndg2)" stroke="#0a0a0a" stroke-width="1"/>
<rect x="565" y="681" width="52" height="20" fill="url(#ndg2)" stroke="#0a0a0a" stroke-width="1"/>
<rect x="459" y="715" width="51.5" height="19.5" fill="url(#ndg2)" stroke="#0a0a0a" stroke-width="1"/>
<rect x="462.5" y="748.5" width="52" height="19" fill="url(#ndg2)" stroke="#0a0a0a" stroke-width="1"/>
<!-- thumbnails -->
<rect x="526" y="630" width="41" height="31" fill="#2fc548"/>
<rect x="527" y="631.5" width="8" height="8" fill="#e8f4e8"/><rect x="548" y="632" width="13" height="6" fill="#f2f8f2"/><rect x="526" y="648" width="7" height="9" fill="#1a2a20"/><rect x="545" y="636" width="2" height="14" fill="#1c2c22"/><rect x="562" y="645" width="2" height="12" fill="#1c2c22"/><rect x="538" y="657" width="12" height="1.5" fill="#9aa"/><rect x="526" y="658.5" width="41" height="2.5" fill="#5a6a5e"/>
<rect x="384" y="665" width="41.5" height="31" fill="url(#sky)"/>
<path d="M384 680L392 674L398 676L404 668L409 666L414 672L420 676L425.5 672V684H384Z" fill="#8a97a8"/><path d="M402 670L409 666L413 671L409 676L404 675Z" fill="#e4e8f0"/><path d="M384 681L396 679L406 682L416 677L425.5 672V687H384Z" fill="#2a5e22"/><path d="M404 681L414 677L425.5 674V685L406 686Z" fill="#4e8e2a"/><path d="M397 687V695M401 687V694" stroke="#6a86c8" stroke-width="1" opacity="0.7"/>
</g></svg>
<span class="t" style="left:520px;top:619.00px;font-size:7.9px;color:#1a1016;font-family:'DejaVu Sans','Liberation Sans',sans-serif;font-stretch:normal;letter-spacing:-0.310px;">ReadOIIOOFX_1</span>
<span class="t" style="left:378.5px;top:654.00px;font-size:7.9px;color:#1a1016;font-family:'DejaVu Sans','Liberation Sans',sans-serif;font-stretch:normal;letter-spacing:-0.310px;">ReadOIIOOFX_2</span>
<span class="t" style="left:309.5px;top:718.50px;font-size:7.9px;color:#1a1016;font-family:'DejaVu Sans','Liberation Sans',sans-serif;font-stretch:normal;letter-spacing:-0.278px;">RotoOFX_2</span>
<span class="t" style="left:573px;top:686.00px;font-size:7.9px;color:#1a1016;font-family:'DejaVu Sans','Liberation Sans',sans-serif;font-stretch:normal;letter-spacing:-0.278px;">RotoOFX_1</span>
<span class="t" style="left:443.5px;top:720.00px;font-size:7.9px;color:#1a1016;font-family:'DejaVu Sans','Liberation Sans',sans-serif;font-stretch:normal;letter-spacing:-0.268px;">CornerPinMaskedOFX_2</span>
<span class="t" style="left:454.5px;top:753.00px;font-size:7.9px;color:#1a1016;font-family:'DejaVu Sans','Liberation Sans',sans-serif;font-stretch:normal;letter-spacing:-0.342px;">ChromaKeyerOFX_1</span>
<span class="t" style="left:333px;top:690.00px;font-size:7.8px;color:#e2e2e2;font-family:'DejaVu Sans','Liberation Sans',sans-serif;font-stretch:normal;letter-spacing:-0.297px;">Source</span>
<span class="t" style="left:596.5px;top:657.50px;font-size:7.8px;color:#e2e2e2;font-family:'DejaVu Sans','Liberation Sans',sans-serif;font-stretch:normal;letter-spacing:-0.297px;">Source</span>
<span class="t" style="left:452.5px;top:693.50px;font-size:7.8px;color:#e2e2e2;font-family:'DejaVu Sans','Liberation Sans',sans-serif;font-stretch:normal;letter-spacing:-0.273px;">Mask</span>
<span class="t" style="left:516.5px;top:703.00px;font-size:7.8px;color:#e2e2e2;font-family:'DejaVu Sans','Liberation Sans',sans-serif;font-stretch:normal;letter-spacing:-0.297px;">Source</span>
<span class="t" style="left:486px;top:738.00px;font-size:7.8px;color:#e2e2e2;font-family:'DejaVu Sans','Liberation Sans',sans-serif;font-stretch:normal;letter-spacing:-0.297px;">Source</span>
<span class="t" style="left:407px;top:737.50px;font-size:7.8px;color:#e2e2e2;font-family:'DejaVu Sans','Liberation Sans',sans-serif;font-stretch:normal;letter-spacing:-0.219px;">OutM</span>
<span class="t" style="left:513.5px;top:734.50px;font-size:7.8px;color:#e2e2e2;font-family:'DejaVu Sans','Liberation Sans',sans-serif;font-stretch:normal;letter-spacing:0.031px;">2</span>
<span class="t" style="left:483.5px;top:770.00px;font-size:7.8px;color:#e2e2e2;font-family:'DejaVu Sans','Liberation Sans',sans-serif;font-stretch:normal;letter-spacing:-0.969px;">1</span>
<div style="left:850px;top:57px;width:14px;height:15.0px;background:#474747;border:1px solid #000;box-sizing:border-box;border-radius:3px;overflow:hidden;"><div style="left:0;top:0;width:6.5px;height:6.5px;background:#cfcfcf"></div><div style="left:0;top:6.5px;width:6.5px;height:7px;background:#6e6e6e"></div></div>
<div style="left:874px;top:57.5px;width:76.5px;height:17.0px;background:#323232;border:1px solid #000;border-bottom:none;box-sizing:border-box;border-radius:4px 4px 0 0;"></div>
<span class="t" style="left:875.5px;top:58.00px;font-size:13px;color:#c8c8c8;letter-spacing:-0.156px;">Properties</span>
<svg style="left:934.5px;top:59px;" width="12" height="12" viewBox="0 0 12 12"><circle cx="6" cy="6" r="5.7" fill="#6e6e6e"/><path d="M3.4 3.4L8.6 8.6M8.6 3.4L3.4 8.6" stroke="#e6e6e6" stroke-width="1.3" fill="none"/></svg>
<div style="left:1322px;top:57px;width:15px;height:15px;background:#474747;border:1px solid #000;box-sizing:border-box;border-radius:3px;"></div>
<svg style="left:1322.5px;top:57.5px;" width="14" height="14" viewBox="0 0 14 14"><rect x="5.5" y="3" width="6" height="5.5" fill="none" stroke="#2a2a2a" stroke-width="1"/><rect x="3" y="5.5" width="6" height="5.5" fill="none" stroke="#2a2a2a" stroke-width="1"/><rect x="6" y="6" width="2.5" height="2" fill="#5e5e5e"/></svg>
<div style="left:850px;top:73px;width:487px;height:3px;background:#000;"></div>
<div style="left:850px;top:74px;width:487px;height:506px;border:2px solid #000;box-sizing:border-box;border-left-width:1px;border-bottom-width:1px;"></div>
<div style="left:851px;top:97px;width:484px;height:1.2000000000000028px;background:#000;"></div>
<div class="btn" style="left:852px;top:79px;width:16px;height:16px;border-radius:4px;"></div>
<svg style="left:852px;top:79px;" width="15.5" height="15.5" viewBox="0 0 15.5 15.5"><circle cx="7.75" cy="7.75" r="5.6" fill="#5a5a5a" stroke="#9a9a9a" stroke-width="1.1"/><rect x="4.6" y="4.6" width="6.3" height="6.3" fill="none" stroke="#777" stroke-width="0.7"/><circle cx="7.75" cy="7.75" r="1.3" fill="#e8141e"/></svg>
<div class="fld" style="left:869px;top:77px;width:127px;height:19px;"></div>
<span class="t" style="left:873px;top:79.50px;font-size:13px;color:#c8c8c8;letter-spacing:-0.075px;">RotoOFX_2</span>
<div class="btn" style="left:1100px;top:77px;width:20px;height:19px;border-radius:3px;"></div>
<div class="btn" style="left:1122px;top:77px;width:20px;height:19px;border-radius:3px;"></div>
<div class="btn" style="left:1144px;top:77px;width:20px;height:19px;border-radius:3px;"></div>
<svg style="left:1100.5px;top:77px;" width="19" height="18.5" viewBox="0 0 19 18.5"><path d="M2.9 6.2V14.3H10.9Z" fill="#0a0a0a"/><path d="M7.4 11C9 8.6 13.6 7.6 16.4 11" stroke="#0a0a0a" stroke-width="1.7" fill="none"/></svg>
<svg style="left:1122.5px;top:77px;" width="19" height="18.5" viewBox="0 0 19 18.5"><path d="M15.9 6.2V15H7.4Z" fill="#a4a4a4"/><path d="M2.6 11.8C4.4 8.8 9.4 8.6 11.8 11.8" stroke="#b4b4b4" stroke-width="1.5" fill="none"/></svg>
<svg style="left:1144.5px;top:77px;" width="19" height="18.5" viewBox="0 0 19 18.5"><path d="M15.7 13V4H3.7V14.3H8" stroke="#0a0a0a" stroke-width="1.7" fill="none"/><path d="M9 11.6L11 14.3L9 17L7.4 14.3Z" fill="#0a0a0a"/></svg>
<div style="left:1268px;top:79px;width:15px;height:15px;background:#474747;border:1px solid #000;box-sizing:border-box;border-radius:3px;"></div>
<div style="left:1285px;top:79px;width:15px;height:15px;background:#474747;border:1px solid #000;box-sizing:border-box;border-radius:3px;"></div>
<div style="left:1302px;top:79px;width:15px;height:15px;background:#474747;border:1px solid #000;box-sizing:border-box;border-radius:3px;"></div>
<div style="left:1319px;top:79px;width:15px;height:15px;background:#474747;border:1px solid #000;box-sizing:border-box;border-radius:3px;"></div>
<svg style="left:1268px;top:79px;" width="14.5" height="15" viewBox="0 0 14.5 15"><path d="M4.6 5.4C4.6 2.6 10.2 2.6 10.2 5.6C10.2 7.6 7.6 7.6 7.6 9.8" stroke="#080808" stroke-width="2" fill="none"/><rect x="6.5" y="11" width="2.2" height="2.2" fill="#080808"/></svg>
<svg style="left:1285px;top:79px;" width="14.5" height="15" viewBox="0 0 14.5 15"><rect x="2.8" y="10.3" width="9" height="2.2" fill="#080808"/></svg>
<svg style="left:1302px;top:79px;" width="14.5" height="15" viewBox="0 0 14.5 15"><rect x="5.8" y="3.3" width="6" height="5.5" fill="none" stroke="#2a2a2a" stroke-width="1"/><rect x="3.2" y="5.8" width="6" height="5.5" fill="none" stroke="#2a2a2a" stroke-width="1"/><rect x="6.3" y="6.3" width="2.5" height="2" fill="#5e5e5e"/></svg>
<svg style="left:1319px;top:79px;" width="14.5" height="15" viewBox="0 0 14.5 15"><path d="M3.4 3.6L11 11.4M11 3.6L3.4 11.4" stroke="#080808" stroke-width="2.4" fill="none"/></svg>
<div style="left:851.5px;top:99px;width:49px;height:15.5px;border:1px solid #000;border-left-color:#1a1a1a;border-bottom:none;box-sizing:border-box;border-radius:4px 4px 0 0;background:#323232;border-left:none;"></div>
<span class="t" style="left:852.5px;top:99.00px;font-size:13px;color:#c8c8c8;letter-spacing:-0.248px;">Settings</span>
<span class="t" style="left:878.5px;top:114.50px;font-size:13px;color:#c8c8c8;letter-spacing:0.414px;">Premultiply:</span>
<div style="left:958px;top:114px;width:12px;height:13px;background:#474747;"></div>
<span class="t" style="left:902px;top:140.00px;font-size:13px;color:#c8c8c8;letter-spacing:0.377px;">Opacity:</span>
<div style="left:960px;top:137px;width:50px;height:21px;background:#474747;border:1px solid #000;box-sizing:border-box;border-radius:2px;"></div>
<span class="t" style="left:964.5px;top:140.00px;font-size:13px;color:#c8c8c8;letter-spacing:-0.137px;">1.00</span>
<span class="t" style="left:903.5px;top:173.00px;font-size:13px;color:#c8c8c8;letter-spacing:0.236px;">Feather:</span>
<div style="left:960px;top:170px;width:50px;height:21px;background:#474747;border:1px solid #000;box-sizing:border-box;border-radius:2px;"></div>
<span class="t" style="left:964.5px;top:173.00px;font-size:13px;color:#c8c8c8;letter-spacing:-0.953px;">0</span>
<span class="t" style="left:854.5px;top:206.00px;font-size:13px;color:#c8c8c8;letter-spacing:0.529px;">Feather fall-off:</span>
<div style="left:960px;top:203px;width:50px;height:21px;background:#474747;border:1px solid #000;box-sizing:border-box;border-radius:2px;"></div>
<span class="t" style="left:964.5px;top:206.00px;font-size:13px;color:#c8c8c8;letter-spacing:-0.137px;">1.00</span>
<svg style="left:0px;top:0px;" width="1394" height="888" viewBox="0 0 1394 888"><rect x="1013" y="149" width="150" height="1" fill="#5e5e5e"/><rect x="1013" y="182" width="150" height="1" fill="#5e5e5e"/><rect x="1013" y="215" width="150" height="1" fill="#5e5e5e"/><rect x="1019" y="144.6" width="1" height="9" fill="#e0e0e0"/><rect x="1026" y="145.7" width="1" height="7" fill="#4c4c4c"/><rect x="1033" y="145.7" width="1" height="7" fill="#4c4c4c"/><rect x="1040" y="145.7" width="1" height="7" fill="#4c4c4c"/><rect x="1046" y="145.7" width="1" height="7" fill="#4c4c4c"/><rect x="1053" y="145.7" width="1" height="7" fill="#4c4c4c"/><rect x="1060" y="145.7" width="1" height="7" fill="#4c4c4c"/><rect x="1067" y="145.7" width="1" height="7" fill="#4c4c4c"/><rect x="1074" y="145.7" width="1" height="7" fill="#4c4c4c"/><rect x="1081" y="145.7" width="1" height="7" fill="#4c4c4c"/><rect x="1088" y="145.7" width="1" height="7" fill="#5e5e5e"/><rect x="1095" y="145.7" width="1" height="7" fill="#4c4c4c"/><rect x="1102" y="145.7" width="1" height="7" fill="#4c4c4c"/><rect x="1108" y="145.7" width="1" height="7" fill="#4c4c4c"/><rect x="1115" y="145.7" width="1" height="7" fill="#4c4c4c"/><rect x="1122" y="145.7" width="1" height="7" fill="#4c4c4c"/><rect x="1129" y="145.7" width="1" height="7" fill="#4c4c4c"/><rect x="1136" y="145.7" width="1" height="7" fill="#4c4c4c"/><rect x="1143" y="145.7" width="1" height="7" fill="#4c4c4c"/><rect x="1150" y="145.7" width="1" height="7" fill="#4c4c4c"/><rect x="1156" y="145.7" width="1" height="7" fill="#4c4c4c"/><rect x="1019" y="178.7" width="1" height="7" fill="#5e5e5e"/><rect x="1026" y="178.7" width="1" height="7" fill="#4c4c4c"/><rect x="1033" y="178.7" width="1" height="7" fill="#4c4c4c"/><rect x="1039" y="178.7" width="1" height="7" fill="#4c4c4c"/><rect x="1046" y="178.7" width="1" height="7" fill="#4c4c4c"/><rect x="1053" y="178.7" width="1" height="7" fill="#5e5e5e"/><rect x="1060" y="178.7" width="1" height="7" fill="#4c4c4c"/><rect x="1067" y="178.7" width="1" height="7" fill="#4c4c4c"/><rect x="1074" y="178.7" width="1" height="7" fill="#4c4c4c"/><rect x="1080" y="178.7" width="1" height="7" fill="#4c4c4c"/><rect x="1087" y="178.7" width="1" height="7" fill="#5e5e5e"/><rect x="1094" y="178.7" width="1" height="7" fill="#4c4c4c"/><rect x="1101" y="178.7" width="1" height="7" fill="#4c4c4c"/><rect x="1108" y="178.7" width="1" height="7" fill="#4c4c4c"/><rect x="1115" y="178.7" width="1" height="7" fill="#4c4c4c"/><rect x="1122" y="178.7" width="1" height="7" fill="#5e5e5e"/><rect x="1128" y="178.7" width="1" height="7" fill="#4c4c4c"/><rect x="1135" y="178.7" width="1" height="7" fill="#4c4c4c"/><rect x="1142" y="178.7" width="1" height="7" fill="#4c4c4c"/><rect x="1149" y="178.7" width="1" height="7" fill="#4c4c4c"/><rect x="1156" y="178.7" width="1" height="7" fill="#5e5e5e"/><rect x="1014" y="210.6" width="1" height="9" fill="#e0e0e0"/><rect x="1028" y="211.7" width="1" height="7" fill="#4c4c4c"/><rect x="1042" y="211.7" width="1" height="7" fill="#4c4c4c"/><rect x="1057" y="211.7" width="1" height="7" fill="#4c4c4c"/><rect x="1071" y="211.7" width="1" height="7" fill="#4c4c4c"/><rect x="1085" y="211.7" width="1" height="7" fill="#4c4c4c"/><rect x="1099" y="211.7" width="1" height="7" fill="#4c4c4c"/><rect x="1113" y="211.7" width="1" height="7" fill="#4c4c4c"/><rect x="1128" y="211.7" width="1" height="7" fill="#4c4c4c"/><rect x="1142" y="211.7" width="1" height="7" fill="#4c4c4c"/><rect x="1156" y="211.7" width="1" height="7" fill="#6a6a6a"/></svg>
<span class="t" style="left:1019px;top:155.00px;font-size:7.8px;color:#c8c8c8;font-family:'DejaVu Sans','Liberation Sans',sans-serif;font-stretch:normal;letter-spacing:0.031px;">0</span>
<span class="t" style="left:1088.3px;top:155.00px;font-size:7.8px;color:#c8c8c8;font-family:'DejaVu Sans','Liberation Sans',sans-serif;font-stretch:normal;letter-spacing:-0.235px;">0.5</span>
<span class="t" style="left:1157.2px;top:155.00px;font-size:7.8px;color:#c8c8c8;font-family:'DejaVu Sans','Liberation Sans',sans-serif;font-stretch:normal;letter-spacing:-1.600px;">1</span>
<span class="t" style="left:1019px;top:188.00px;font-size:7.8px;color:#c8c8c8;font-family:'DejaVu Sans','Liberation Sans',sans-serif;font-stretch:normal;letter-spacing:0.399px;">-100</span>
<span class="t" style="left:1053.2px;top:188.00px;font-size:7.8px;color:#c8c8c8;font-family:'DejaVu Sans','Liberation Sans',sans-serif;font-stretch:normal;letter-spacing:0.517px;">-50</span>
<span class="t" style="left:1087.6px;top:188.00px;font-size:7.8px;color:#c8c8c8;font-family:'DejaVu Sans','Liberation Sans',sans-serif;font-stretch:normal;letter-spacing:-0.569px;">0</span>
<span class="t" style="left:1122.3px;top:188.00px;font-size:7.8px;color:#c8c8c8;font-family:'DejaVu Sans','Liberation Sans',sans-serif;font-stretch:normal;letter-spacing:-0.111px;">50</span>
<div style="left:1156px;top:184px;width:7.2px;height:14px;overflow:hidden;"><span class="t" style="left:0.5px;top:3.9px;font-size:7.8px;letter-spacing:0.2px;color:#c8c8c8;font-family:'DejaVu Sans',sans-serif;font-stretch:normal;">100</span></div>
<span class="t" style="left:1014.2px;top:221.00px;font-size:7.8px;color:#c8c8c8;font-family:'DejaVu Sans','Liberation Sans',sans-serif;font-stretch:normal;letter-spacing:-0.169px;">0</span>
<span class="t" style="left:1043px;top:221.00px;font-size:7.8px;color:#c8c8c8;font-family:'DejaVu Sans','Liberation Sans',sans-serif;font-stretch:normal;letter-spacing:-1.369px;">1</span>
<span class="t" style="left:1070.7px;top:221.00px;font-size:7.8px;color:#c8c8c8;font-family:'DejaVu Sans','Liberation Sans',sans-serif;font-stretch:normal;letter-spacing:-0.669px;">2</span>
<span class="t" style="left:1099.2px;top:221.00px;font-size:7.8px;color:#c8c8c8;font-family:'DejaVu Sans','Liberation Sans',sans-serif;font-stretch:normal;letter-spacing:-0.569px;">3</span>
<span class="t" style="left:1127.6px;top:221.00px;font-size:7.8px;color:#c8c8c8;font-family:'DejaVu Sans','Liberation Sans',sans-serif;font-stretch:normal;letter-spacing:-0.569px;">4</span>
<span class="t" style="left:1156.8px;top:221.00px;font-size:7.8px;color:#c8c8c8;font-family:'DejaVu Sans','Liberation Sans',sans-serif;font-stretch:normal;letter-spacing:-0.969px;">5</span>
<span class="t" style="left:1028.4px;top:221.00px;font-size:7.8px;color:#464646;font-family:'DejaVu Sans','Liberation Sans',sans-serif;font-stretch:normal;letter-spacing:-0.335px;">0.5</span>
<span class="t" style="left:1056.6px;top:221.00px;font-size:7.8px;color:#464646;font-family:'DejaVu Sans','Liberation Sans',sans-serif;font-stretch:normal;letter-spacing:-0.335px;">1.5</span>
<span class="t" style="left:1085px;top:221.00px;font-size:7.8px;color:#464646;font-family:'DejaVu Sans','Liberation Sans',sans-serif;font-stretch:normal;letter-spacing:-0.335px;">2.5</span>
<span class="t" style="left:1113.4px;top:221.00px;font-size:7.8px;color:#464646;font-family:'DejaVu Sans','Liberation Sans',sans-serif;font-stretch:normal;letter-spacing:-0.335px;">3.5</span>
<span class="t" style="left:1141.7px;top:221.00px;font-size:7.8px;color:#464646;font-family:'DejaVu Sans','Liberation Sans',sans-serif;font-stretch:normal;letter-spacing:-0.335px;">4.5</span>
<div style="left:1154px;top:137px;width:5px;height:21px;background:#7c6a26;border:1px solid #000;box-sizing:border-box;"></div>
<div style="left:1085px;top:170px;width:5px;height:21px;background:#7c6a26;border:1px solid #000;box-sizing:border-box;"></div>
<div style="left:1040px;top:203px;width:5px;height:21px;background:#7c6a26;border:1px solid #000;box-sizing:border-box;"></div>
<div class="btn" style="left:1177px;top:138px;width:20px;height:20px;border-radius:4px;"></div>
<svg style="left:1177px;top:138px;" width="19" height="19" viewBox="0 0 19 19"><path d="M3.4 12.8C4.2 7.2 6.6 5.4 8.4 6.2C10.6 7.2 10.6 15.4 12.6 15.8L17 3" stroke="#e0e0e0" stroke-width="1.4" fill="none" stroke-linecap="round" stroke-linejoin="round"/></svg>
<div class="btn" style="left:1177px;top:171px;width:20px;height:20px;border-radius:4px;"></div>
<svg style="left:1177px;top:171px;" width="19" height="19" viewBox="0 0 19 19"><path d="M3.4 12.8C4.2 7.2 6.6 5.4 8.4 6.2C10.6 7.2 10.6 15.4 12.6 15.8L17 3" stroke="#e0e0e0" stroke-width="1.4" fill="none" stroke-linecap="round" stroke-linejoin="round"/></svg>
<div class="btn" style="left:1177px;top:204px;width:20px;height:20px;border-radius:4px;"></div>
<svg style="left:1177px;top:204px;" width="19" height="19" viewBox="0 0 19 19"><path d="M3.4 12.8C4.2 7.2 6.6 5.4 8.4 6.2C10.6 7.2 10.6 15.4 12.6 15.8L17 3" stroke="#e0e0e0" stroke-width="1.4" fill="none" stroke-linecap="round" stroke-linejoin="round"/></svg>
<span class="t" style="left:891px;top:238.00px;font-size:13px;color:#c8c8c8;letter-spacing:0.272px;">Activated:</span>
<svg style="left:958px;top:239.5px;" width="12" height="12" viewBox="0 0 12 12"><rect width="12" height="12" fill="#474747"/><path d="M0.8 0.8L11.2 11.2M11.2 0.8L0.8 11.2" stroke="#e6e6e6" stroke-width="1.2"/></svg>
<div class="btn" style="left:977px;top:235px;width:21px;height:20px;border-radius:4px;"></div>
<svg style="left:977.5px;top:235px;" width="19" height="19" viewBox="0 0 19 19"><path d="M3.4 12.8C4.2 7.2 6.6 5.4 8.4 6.2C10.6 7.2 10.6 15.4 12.6 15.8L17 3" stroke="#e0e0e0" stroke-width="1.4" fill="none" stroke-linecap="round" stroke-linejoin="round"/></svg>
<span class="t" style="left:1011px;top:238.00px;font-size:13px;color:#c8c8c8;letter-spacing:0.174px;">Inverted:</span>
<div style="left:1073px;top:239px;width:12px;height:13px;background:#474747;"></div>
<div class="btn" style="left:1092px;top:235px;width:21px;height:20px;border-radius:4px;"></div>
<svg style="left:1092.5px;top:235px;" width="19" height="19" viewBox="0 0 19 19"><path d="M3.4 12.8C4.2 7.2 6.6 5.4 8.4 6.2C10.6 7.2 10.6 15.4 12.6 15.8L17 3" stroke="#e0e0e0" stroke-width="1.4" fill="none" stroke-linecap="round" stroke-linejoin="round"/></svg>
<span class="t" style="left:878px;top:289.00px;font-size:13px;color:#c8c8c8;letter-spacing:0.298px;">Spline keyframe:</span>
<div style="left:985px;top:286px;width:50px;height:21px;background:#5f7fb0;border:1px solid #000;box-sizing:border-box;border-radius:2px;"></div>
<span class="t" style="left:990px;top:289.00px;font-size:13px;color:#16202e;letter-spacing:-0.512px;">1.00</span>
<span class="t" style="left:1037.5px;top:289.00px;font-size:13px;color:#c8c8c8;letter-spacing:0.359px;">of</span>
<div style="left:1053px;top:286px;width:50px;height:21px;background:#474747;border:1px solid #000;box-sizing:border-box;border-radius:2px;"></div>
<span class="t" style="left:1058.5px;top:289.00px;font-size:13px;color:#101010;letter-spacing:-1.600px;">1</span>
<div class="btn" style="left:1105px;top:287px;width:20px;height:19px;border-radius:3px;"></div>
<div class="btn" style="left:1127px;top:287px;width:20px;height:19px;border-radius:3px;"></div>
<div class="btn" style="left:1149px;top:287px;width:20px;height:19px;border-radius:3px;"></div>
<div class="btn" style="left:1171px;top:287px;width:20px;height:19px;border-radius:3px;"></div>
<svg style="left:1105.5px;top:287px;" width="19" height="19" viewBox="0 0 19 19"><circle cx="5" cy="5" r="1.8" fill="none" stroke="#dcdcdc" stroke-width="0.9"/><path d="M6.8 5H14.5M11 5V7.8M14 5V7.8" stroke="#dcdcdc" stroke-width="0.9" fill="none"/><path d="M13.5 8.5V16.5L5 12.5Z" fill="#dcdcdc"/></svg>
<svg style="left:1127.5px;top:287px;" width="19" height="19" viewBox="0 0 19 19"><circle cx="5" cy="5" r="1.8" fill="none" stroke="#dcdcdc" stroke-width="0.9"/><path d="M6.8 5H14.5M11 5V7.8M14 5V7.8" stroke="#dcdcdc" stroke-width="0.9" fill="none"/><path d="M5.5 8.5V16.5L14 12.5Z" fill="#dcdcdc"/></svg>
<svg style="left:1149.5px;top:287px;" width="19" height="19" viewBox="0 0 19 19"><circle cx="5" cy="5" r="1.8" fill="none" stroke="#dcdcdc" stroke-width="0.9"/><path d="M6.8 5H14.5M11 5V7.8M14 5V7.8" stroke="#dcdcdc" stroke-width="0.9" fill="none"/><path d="M5 12.8H14.5M9.7 8.5V17" stroke="#dcdcdc" stroke-width="1.5" fill="none"/></svg>
<svg style="left:1171.5px;top:287px;" width="19" height="19" viewBox="0 0 19 19"><circle cx="5" cy="5" r="1.8" fill="none" stroke="#dcdcdc" stroke-width="0.9"/><path d="M6.8 5H14.5M11 5V7.8M14 5V7.8" stroke="#dcdcdc" stroke-width="0.9" fill="none"/><path d="M5 12.2H14.5" stroke="#dcdcdc" stroke-width="1.5" fill="none"/></svg>
<div style="left:867px;top:330px;width:455px;height:24px;background:#323232;border:1px solid #0c0c0c;box-sizing:border-box;"></div>
<div style="left:988.0px;top:331px;width:1.0px;height:22px;background:#0c0c0c;"></div>
<div style="left:1013.0px;top:331px;width:1.0px;height:22px;background:#0c0c0c;"></div>
<div style="left:1038.0px;top:331px;width:1.0px;height:22px;background:#0c0c0c;"></div>
<div style="left:1063.0px;top:331px;width:1.0px;height:22px;background:#0c0c0c;"></div>
<div style="left:867px;top:353px;width:455px;height:167px;background:#474747;"></div>
<span class="t" style="left:871px;top:334.00px;font-size:13px;color:#c8c8c8;letter-spacing:-0.379px;">Name</span>
<div style="left:867px;top:405px;width:455px;height:17px;background:#f39500;"></div>
<svg style="left:993.5px;top:335.7px;" width="14" height="11" viewBox="0 0 14 11"><path d="M0.6 6.2C3.2 2.2 10.8 2.2 13.4 6.2C10.8 10.2 3.2 10.2 0.6 6.2Z" fill="none" stroke="#e0e0e0" stroke-width="1.2"/><circle cx="7" cy="6.2" r="3" fill="#5a5a5a" stroke="#e0e0e0" stroke-width="0.6"/><path d="M1.6 2.6L2.8 4M3.8 1.2L4.6 2.8M6.4 0.5L6.6 2.2M9 0.8L8.6 2.4M11.4 1.8L10.6 3.2" stroke="#e0e0e0" stroke-width="0.7"/></svg>
<svg style="left:1019.5px;top:333.5px;" width="14" height="16" viewBox="0 0 14 16"><path d="M3.8 8V5.4C3.8 1.2 10.2 1.2 10.2 5.4V8" fill="none" stroke="#e4e4e4" stroke-width="1.4"/><rect x="1.4" y="7.6" width="11.2" height="7" fill="#e4e4e4"/><path d="M6.2 9H7.8L8.2 13H5.8Z" fill="#111"/></svg>
<svg style="left:1044.5px;top:335.5px;" width="13" height="13" viewBox="0 0 13 13"><defs><radialGradient id="cwc" cx="0.5" cy="0.5" r="0.5"><stop offset="0" stop-color="#fff"/><stop offset="0.35" stop-color="#fff" stop-opacity="0.75"/><stop offset="1" stop-color="#fff" stop-opacity="0"/></radialGradient></defs><g><path d="M6.5 6.5L6.5 0A6.5 6.5 0 0 1 12.13 3.25Z" fill="#ff2a2a"/><path d="M6.5 6.5L12.13 3.25A6.5 6.5 0 0 1 12.13 9.75Z" fill="#ff30ff"/><path d="M6.5 6.5L12.13 9.75A6.5 6.5 0 0 1 6.5 13Z" fill="#3a3aff"/><path d="M6.5 6.5L6.5 13A6.5 6.5 0 0 1 0.87 9.75Z" fill="#2ae0e0"/><path d="M6.5 6.5L0.87 9.75A6.5 6.5 0 0 1 0.87 3.25Z" fill="#30e030"/><path d="M6.5 6.5L0.87 3.25A6.5 6.5 0 0 1 6.5 0Z" fill="#ffe020"/><circle cx="6.5" cy="6.5" r="6.5" fill="url(#cwc)"/></g></svg>
<svg style="left:1068px;top:335px;" width="15" height="15" viewBox="0 0 15 15"><rect width="15" height="15" fill="#707070"/><path d="M0 0H15L0 15Z" fill="#c4c4c4"/></svg>
<svg style="left:872.5px;top:356.5px;" width="11" height="12" viewBox="0 0 11 12"><path d="M0 0H11L5.5 12Z" fill="#050505"/></svg>
<svg style="left:893px;top:357.5px;" width="13" height="10.5" viewBox="0 0 13 10.5"><path d="M3 0H13L10 10.5H0Z" fill="#f0f0f0"/></svg>
<span class="t" style="left:913px;top:354.50px;font-size:13px;color:#c8c8c8;letter-spacing:-0.395px;">Layer 1</span>
<svg style="left:994.5px;top:356.7px;" width="14" height="11" viewBox="0 0 14 11"><path d="M0.6 6.2C3.2 2.2 10.8 2.2 13.4 6.2C10.8 10.2 3.2 10.2 0.6 6.2Z" fill="none" stroke="#e0e0e0" stroke-width="1.2"/><circle cx="7" cy="6.2" r="3" fill="#5a5a5a" stroke="#e0e0e0" stroke-width="0.6"/><path d="M1.6 2.6L2.8 4M3.8 1.2L4.6 2.8M6.4 0.5L6.6 2.2M9 0.8L8.6 2.4M11.4 1.8L10.6 3.2" stroke="#e0e0e0" stroke-width="0.7"/></svg>
<svg style="left:1020.5px;top:354.5px;" width="14" height="16" viewBox="0 0 14 16"><path d="M4.6 7V4.2C4.6 0.4 10.6 0 10.8 4.4" fill="none" stroke="#e4e4e4" stroke-width="1.3"/><path d="M0.6 7.6L11.2 5.8L12.8 13.6L2.2 15.6Z" fill="#e0e0e0"/><path d="M6 8.4L7.6 8.1L8.6 12.4L5.8 12.9Z" fill="#111"/></svg>
<svg style="left:913.5px;top:373.5px;" width="13" height="13" viewBox="0 0 13 13"><path d="M1 12C1.6 6.5 4 3.6 8.6 2.6" stroke="#d8d8d8" stroke-width="0.9" fill="none" stroke-dasharray="2.4 1"/><path d="M9.5 0.8L10.8 3.2M12.6 1.6L10.6 2.4" stroke="#d8d8d8" stroke-width="0.8"/></svg>
<span class="t" style="left:933px;top:372.00px;font-size:13px;color:#c8c8c8;letter-spacing:-0.285px;">Bezier 1</span>
<svg style="left:994.5px;top:373.7px;" width="14" height="11" viewBox="0 0 14 11"><path d="M0.6 6.2C3.2 2.2 10.8 2.2 13.4 6.2C10.8 10.2 3.2 10.2 0.6 6.2Z" fill="none" stroke="#e0e0e0" stroke-width="1.2"/><circle cx="7" cy="6.2" r="3" fill="#5a5a5a" stroke="#e0e0e0" stroke-width="0.6"/><path d="M1.6 2.6L2.8 4M3.8 1.2L4.6 2.8M6.4 0.5L6.6 2.2M9 0.8L8.6 2.4M11.4 1.8L10.6 3.2" stroke="#e0e0e0" stroke-width="0.7"/></svg>
<svg style="left:1020.5px;top:371.5px;" width="14" height="16" viewBox="0 0 14 16"><path d="M4.6 7V4.2C4.6 0.4 10.6 0 10.8 4.4" fill="none" stroke="#e4e4e4" stroke-width="1.3"/><path d="M0.6 7.6L11.2 5.8L12.8 13.6L2.2 15.6Z" fill="#e4e4e4"/><path d="M6 8.4L7.6 8.1L8.6 12.4L5.8 12.9Z" fill="#111"/></svg>
<div style="left:1044px;top:372.3px;width:15px;height:15.699999999999989px;background:#dc3232;"></div>
<svg style="left:1069px;top:372.3px;" width="15.2" height="15.2" viewBox="0 0 15.2 15.2"><rect width="15.2" height="15.2" fill="#6e6e6e"/><path d="M0 0H15.2L0 15.2Z" fill="#c4c4c4"/></svg>
<svg style="left:913.5px;top:390.5px;" width="13" height="13" viewBox="0 0 13 13"><path d="M1 12C1.6 6.5 4 3.6 8.6 2.6" stroke="#d8d8d8" stroke-width="0.9" fill="none" stroke-dasharray="2.4 1"/><path d="M9.5 0.8L10.8 3.2M12.6 1.6L10.6 2.4" stroke="#d8d8d8" stroke-width="0.8"/></svg>
<span class="t" style="left:933px;top:389.00px;font-size:13px;color:#c8c8c8;letter-spacing:-0.285px;">Bezier 2</span>
<svg style="left:994.5px;top:390.7px;" width="14" height="11" viewBox="0 0 14 11"><path d="M0.6 6.2C3.2 2.2 10.8 2.2 13.4 6.2C10.8 10.2 3.2 10.2 0.6 6.2Z" fill="none" stroke="#e0e0e0" stroke-width="1.2"/><circle cx="7" cy="6.2" r="3" fill="#5a5a5a" stroke="#e0e0e0" stroke-width="0.6"/><path d="M1.6 2.6L2.8 4M3.8 1.2L4.6 2.8M6.4 0.5L6.6 2.2M9 0.8L8.6 2.4M11.4 1.8L10.6 3.2" stroke="#e0e0e0" stroke-width="0.7"/></svg>
<svg style="left:1020.5px;top:388.5px;" width="14" height="16" viewBox="0 0 14 16"><path d="M4.6 7V4.2C4.6 0.4 10.6 0 10.8 4.4" fill="none" stroke="#e4e4e4" stroke-width="1.3"/><path d="M0.6 7.6L11.2 5.8L12.8 13.6L2.2 15.6Z" fill="#e4e4e4"/><path d="M6 8.4L7.6 8.1L8.6 12.4L5.8 12.9Z" fill="#111"/></svg>
<div style="left:1044px;top:389.3px;width:15px;height:15.699999999999989px;background:#dc3232;"></div>
<svg style="left:1069px;top:389.3px;" width="15.2" height="15.2" viewBox="0 0 15.2 15.2"><rect width="15.2" height="15.2" fill="#6e6e6e"/><path d="M0 0H15.2L0 15.2Z" fill="#c4c4c4"/></svg>
<svg style="left:913.5px;top:407.5px;" width="13" height="13" viewBox="0 0 13 13"><path d="M1 12C1.6 6.5 4 3.6 8.6 2.6" stroke="#fff" stroke-width="0.9" fill="none" stroke-dasharray="2.4 1"/><path d="M9.5 0.8L10.8 3.2M12.6 1.6L10.6 2.4" stroke="#fff" stroke-width="0.8"/></svg>
<span class="t" style="left:933px;top:406.00px;font-size:13px;color:#fff;letter-spacing:-0.285px;-webkit-text-stroke:0.55px;">Bezier 3</span>
<svg style="left:994.5px;top:407.7px;" width="14" height="11" viewBox="0 0 14 11"><path d="M0.6 6.2C3.2 2.2 10.8 2.2 13.4 6.2C10.8 10.2 3.2 10.2 0.6 6.2Z" fill="none" stroke="#f4f4f4" stroke-width="1.2"/><circle cx="7" cy="6.2" r="3" fill="#7a8698" stroke="#f4f4f4" stroke-width="0.6"/><path d="M1.6 2.6L2.8 4M3.8 1.2L4.6 2.8M6.4 0.5L6.6 2.2M9 0.8L8.6 2.4M11.4 1.8L10.6 3.2" stroke="#f4f4f4" stroke-width="0.7"/></svg>
<svg style="left:1020.5px;top:405.5px;" width="14" height="16" viewBox="0 0 14 16"><path d="M4.6 7V4.2C4.6 0.4 10.6 0 10.8 4.4" fill="none" stroke="#e4e4e4" stroke-width="1.3"/><path d="M0.6 7.6L11.2 5.8L12.8 13.6L2.2 15.6Z" fill="#c4cce0"/><path d="M6 8.4L7.6 8.1L8.6 12.4L5.8 12.9Z" fill="#111"/></svg>
<div style="left:1044px;top:406.3px;width:15px;height:15.699999999999989px;background:#d26672;"></div>
<svg style="left:1069px;top:406.3px;" width="15.2" height="15.2" viewBox="0 0 15.2 15.2"><rect width="15.2" height="15.2" fill="#76849c"/><path d="M0 0H15.2L0 15.2Z" fill="#b8c4dc"/></svg>
<svg style="left:913.5px;top:424.5px;" width="13" height="13" viewBox="0 0 13 13"><path d="M1 12C1.6 6.5 4 3.6 8.6 2.6" stroke="#d8d8d8" stroke-width="0.9" fill="none" stroke-dasharray="2.4 1"/><path d="M9.5 0.8L10.8 3.2M12.6 1.6L10.6 2.4" stroke="#d8d8d8" stroke-width="0.8"/></svg>
<span class="t" style="left:933px;top:423.00px;font-size:13px;color:#c8c8c8;letter-spacing:-0.285px;">Bezier 4</span>
<svg style="left:994.5px;top:424.7px;" width="14" height="11" viewBox="0 0 14 11"><path d="M0.6 6.2C3.2 2.2 10.8 2.2 13.4 6.2C10.8 10.2 3.2 10.2 0.6 6.2Z" fill="none" stroke="#e0e0e0" stroke-width="1.2"/><circle cx="7" cy="6.2" r="3" fill="#5a5a5a" stroke="#e0e0e0" stroke-width="0.6"/><path d="M1.6 2.6L2.8 4M3.8 1.2L4.6 2.8M6.4 0.5L6.6 2.2M9 0.8L8.6 2.4M11.4 1.8L10.6 3.2" stroke="#e0e0e0" stroke-width="0.7"/></svg>
<svg style="left:1020.5px;top:422.5px;" width="14" height="16" viewBox="0 0 14 16"><path d="M4.6 7V4.2C4.6 0.4 10.6 0 10.8 4.4" fill="none" stroke="#e4e4e4" stroke-width="1.3"/><path d="M0.6 7.6L11.2 5.8L12.8 13.6L2.2 15.6Z" fill="#e4e4e4"/><path d="M6 8.4L7.6 8.1L8.6 12.4L5.8 12.9Z" fill="#111"/></svg>
<div style="left:1044px;top:423.3px;width:15px;height:15.699999999999989px;background:#dc3232;"></div>
<svg style="left:1069px;top:423.3px;" width="15.2" height="15.2" viewBox="0 0 15.2 15.2"><rect width="15.2" height="15.2" fill="#6e6e6e"/><path d="M0 0H15.2L0 15.2Z" fill="#c4c4c4"/></svg>
<div class="btn" style="left:866px;top:531px;width:19px;height:24px;border-radius:3px;"></div>
<div class="btn" style="left:885px;top:531px;width:16px;height:24px;border-radius:3px;"></div>
<span class="t" style="left:871.5px;top:537.00px;font-size:12px;color:#c8c8c8;font-family:'DejaVu Sans',sans-serif;font-stretch:normal;letter-spacing:-1.600px;">+</span>
<span class="t" style="left:890.5px;top:536.50px;font-size:12px;color:#c8c8c8;font-family:'DejaVu Sans',sans-serif;font-stretch:normal;letter-spacing:0.656px;">-</span>
<div style="left:850px;top:578px;width:487px;height:118px;border:2px solid #000;box-sizing:border-box;border-left-width:1px;border-bottom-width:1.5px;"></div>
<div style="left:850px;top:577px;width:487px;height:3px;background:#000;"></div>
<div style="left:851px;top:600px;width:484px;height:1.2000000000000455px;background:#000;"></div>
<span class="t" style="left:852.5px;top:583.00px;font-size:13px;color:#c8c8c8;letter-spacing:0.303px;">Project Settings</span>
<div class="btn" style="left:1077px;top:580px;width:20px;height:19.0px;border-radius:3px;"></div>
<div class="btn" style="left:1099px;top:580px;width:20px;height:19.0px;border-radius:3px;"></div>
<div class="btn" style="left:1121px;top:580px;width:20px;height:19.0px;border-radius:3px;"></div>
<svg style="left:1077.5px;top:580.5px;" width="19" height="18.5" viewBox="0 0 19 18.5"><path d="M2.9 6.2V14.3H10.9Z" fill="#8e8e8e"/><path d="M7.4 11C9 8.6 13.6 7.6 16.4 11" stroke="#8e8e8e" stroke-width="1.7" fill="none"/></svg>
<svg style="left:1099.5px;top:580.5px;" width="19" height="18.5" viewBox="0 0 19 18.5"><path d="M15.9 6.2V15H7.4Z" fill="#9a9a9a"/><path d="M2.6 11.8C4.4 8.8 9.4 8.6 11.8 11.8" stroke="#a8a8a8" stroke-width="1.5" fill="none"/></svg>
<svg style="left:1121.5px;top:580.5px;" width="19" height="18.5" viewBox="0 0 19 18.5"><path d="M15.7 13V4H3.7V14.3H8" stroke="#0a0a0a" stroke-width="1.7" fill="none"/><path d="M9 11.6L11 14.3L9 17L7.4 14.3Z" fill="#0a0a0a"/></svg>
<div style="left:1268px;top:582px;width:15px;height:15px;background:#474747;border:1px solid #000;box-sizing:border-box;border-radius:3px;"></div>
<div style="left:1285px;top:582px;width:15px;height:15px;background:#474747;border:1px solid #000;box-sizing:border-box;border-radius:3px;"></div>
<div style="left:1302px;top:582px;width:15px;height:15px;background:#474747;border:1px solid #000;box-sizing:border-box;border-radius:3px;"></div>
<div style="left:1319px;top:582px;width:15px;height:15px;background:#474747;border:1px solid #000;box-sizing:border-box;border-radius:3px;"></div>
<svg style="left:1268px;top:582px;" width="14.5" height="15" viewBox="0 0 14.5 15"><path d="M4.6 5.4C4.6 2.6 10.2 2.6 10.2 5.6C10.2 7.6 7.6 7.6 7.6 9.8" stroke="#080808" stroke-width="2" fill="none"/><rect x="6.5" y="11" width="2.2" height="2.2" fill="#080808"/></svg>
<svg style="left:1285px;top:582px;" width="14.5" height="15" viewBox="0 0 14.5 15"><rect x="2.8" y="10.3" width="9" height="2.2" fill="#080808"/></svg>
<svg style="left:1302px;top:582px;" width="14.5" height="15" viewBox="0 0 14.5 15"><rect x="5.8" y="3.3" width="6" height="5.5" fill="none" stroke="#2a2a2a" stroke-width="1"/><rect x="3.2" y="5.8" width="6" height="5.5" fill="none" stroke="#2a2a2a" stroke-width="1"/><rect x="6.3" y="6.3" width="2.5" height="2" fill="#5e5e5e"/></svg>
<svg style="left:1319px;top:582px;" width="14.5" height="15" viewBox="0 0 14.5 15"><path d="M3.4 3.6L11 11.4M11 3.6L3.4 11.4" stroke="#080808" stroke-width="2.4" fill="none"/></svg>
<div style="left:851.5px;top:601.5px;width:61.5px;height:15.5px;border:1px solid #000;border-bottom:none;border-left:none;box-sizing:border-box;border-radius:4px 4px 0 0;background:#323232;"></div>
<span class="t" style="left:852.5px;top:602.00px;font-size:13px;color:#c8c8c8;letter-spacing:-0.132px;">Rendering</span>
<span class="t" style="left:867.5px;top:621.50px;font-size:13px;color:#c8c8c8;letter-spacing:0.434px;">Output Format:</span>
<div style="left:970px;top:618px;width:136px;height:23px;background:#474747;border:1px solid #000;box-sizing:border-box;border-radius:2px;"></div>
<span class="t" style="left:988.5px;top:621.50px;font-size:13px;color:#c8c8c8;letter-spacing:0.555px;">1920 x 1012  1</span>
<svg style="left:1096.5px;top:625.5px;" width="7" height="7" viewBox="0 0 7 7"><path d="M0 0.5H6.6L3.3 6.4Z" fill="#d0d0d0"/></svg>
<div class="btn" style="left:1136px;top:618px;width:94px;height:23px;border-radius:3px;"></div>
<span class="t" style="left:1140.5px;top:621.50px;font-size:13px;color:#c8c8c8;letter-spacing:0.395px;">New format...</span>
<span class="t" style="left:854.5px;top:647.50px;font-size:13px;color:#c8c8c8;letter-spacing:0.396px;">Number of views:</span>
<div style="left:970px;top:645px;width:50px;height:21px;background:#474747;border:1px solid #000;box-sizing:border-box;border-radius:2px;"></div>
<span class="t" style="left:975px;top:647.50px;font-size:13px;color:#c8c8c8;letter-spacing:-1.453px;">1</span>
<span class="t" style="left:870.5px;top:669.50px;font-size:13px;color:#c8c8c8;letter-spacing:0.358px;">Auto previews:</span>
<div style="left:968px;top:669px;width:12px;height:12px;background:#474747;"></div>
<svg style="left:0px;top:0px;" width="1394" height="888" viewBox="0 0 1394 888"><defs>
<linearGradient id="orb" x1="0" y1="0" x2="1" y2="0"><stop offset="0" stop-color="#f7a21a"/><stop offset="1" stop-color="#b86a08"/></linearGradient>
<linearGradient id="bxl" x1="0" y1="0" x2="0" y2="1"><stop offset="0" stop-color="#4a4a4a"/><stop offset="1" stop-color="#2a2a2a"/></linearGradient>
<linearGradient id="bxr" x1="0" y1="0" x2="0" y2="1"><stop offset="0" stop-color="#3a3a3a"/><stop offset="1" stop-color="#1c1c1c"/></linearGradient>
<g id="ring"><circle cx="0" cy="0" r="14.7" fill="#000" stroke="#f39200" stroke-width="1.7"/></g>
<g id="tri"><path d="M12.2 14.2H19.6L15.9 20.6Z" fill="#141414"/></g>
<g id="boxic"><use href="#ring"/>
<path d="M-7.6 -7.6L-4.2 -8.8L-2.4 -1.2L-5.6 0Z" fill="url(#orb)"/><path d="M-5 -8.2L-1.6 -9L-0.2 -2.6L-3 -1.4Z" fill="#d88612"/>
<path d="M3.2 -9.6L7.2 -8.6L4.8 -0.6L1.2 -1.8Z" fill="url(#orb)"/>
<path d="M-4.6 -1.4L0.6 -3.4L4.2 -1.6L-0.6 0.6Z" fill="#e08e14"/>
<path d="M-9.4 -2.6L-0.6 1L-0.6 10.4L-8.6 6.4Z" fill="url(#bxl)"/><path d="M-0.6 1L8.4 -2.4L7.8 6.6L-0.6 10.4Z" fill="url(#bxr)"/>
<path d="M-9.4 -2.6L-6.4 -3.8L-0.6 -1L-0.6 1Z" fill="#585858"/><path d="M8.4 -2.4L5.6 -3.6L-0.6 -1L-0.6 1Z" fill="#4a4a4a"/>
</g>
</defs><g transform="translate(77.3 77)"><use href="#ring"/><path d="M-5.6 -8.6H2.6L6 -5V8.4H-5.6Z" fill="#4a4a4a"/><path d="M2.6 -8.6L6 -5H2.6Z" fill="#7a7a7a"/><path d="M-11.4 -6.4H-7V-8.6L-3.4 -4.6L-7 -0.8V-3H-11.4Z" fill="#f39a14"/><path d="M4.4 3.4H8.8V1.2L12.6 5.2L8.8 9V6.8H4.4Z" fill="#f39a14"/><use href="#tri"/></g><g transform="translate(77.3 121)"><use href="#boxic"/><use href="#tri"/></g><g transform="translate(77.3 165)"><use href="#boxic"/><use href="#tri"/></g><g transform="translate(77.3 209)"><use href="#boxic"/><use href="#tri"/></g><g transform="translate(77.3 253)"><use href="#boxic"/><use href="#tri"/></g><g transform="translate(77.3 297)"><use href="#ring"/><circle cx="0" cy="0.4" r="10.6" fill="#4c4c50"/><circle cx="-4.2" cy="-2.6" r="3.1" fill="#2a55e8"/><circle cx="4.4" cy="-2.6" r="3.1" fill="#d81e1e"/><circle cx="0.2" cy="5" r="3.3" fill="#2ab81e"/><use href="#tri"/></g><g transform="translate(77.3 341)"><use href="#boxic"/><use href="#tri"/></g><g transform="translate(77.3 385)"><use href="#ring"/><circle cx="0" cy="1.6" r="6" fill="#5a5a5e" opacity="0.8"/><circle cx="0" cy="1.6" r="3" fill="#8a8a90" opacity="0.6"/><circle cx="0" cy="1.6" r="9.8" fill="none" stroke="#e8901a" stroke-width="1.2"/><circle cx="0" cy="1.6" r="7.4" fill="none" stroke="#e8901a" stroke-width="2.6" stroke-dasharray="1.5 2.374" transform="rotate(-5.8 0 1.6)"/><rect x="-2.2" y="-12" width="4.4" height="2.4" rx="0.8" fill="#e8901a"/><path d="M-2.4 6.4C-1.6 3 0.4 1.6 5.6 -1.2" stroke="#f0a030" stroke-width="1.3" fill="none"/><use href="#tri"/></g><g transform="translate(77.3 429)"><use href="#ring"/><path d="M-5.6 -13.4H5.6L8.8 2.6L3 0.6L0 3.4L-3 0.6L-8.8 2.6Z" fill="#2e2e2e"/><path d="M-9.4 2.4L-6.6 1.6L-5.6 6.2L-8.6 7Z" fill="#e8901a"/><path d="M-1.5 3.6H1.5V8.6H-1.5Z" fill="#e8901a"/><path d="M9.4 2.4L6.6 1.6L5.6 6.2L8.6 7Z" fill="#e8901a"/><use href="#tri"/></g><g transform="translate(77.3 473)"><use href="#ring"/><path d="M8.2 -7.6A11 11 0 1 0 11 0.6" fill="none" stroke="#e8901a" stroke-width="1.5"/><path d="M9.2 -11L12.4 -5.6L6.4 -5.8Z" fill="#e8901a"/><path d="M0 -7.6L2.6 -4.2H1V-1H4.2V-2.6L7.6 0L4.2 2.6V1H1V4.2H2.6L0 7.6L-2.6 4.2H-1V1H-4.2V2.6L-7.6 0L-4.2 -2.6V-1H-1V-4.2H-2.6Z" fill="#e8901a"/><use href="#tri"/></g><g transform="translate(77.3 517)"><use href="#boxic"/><use href="#tri"/></g><g transform="translate(77.3 561)"><use href="#ring"/><path d="M-5.6 -10C-2.6 -7.6 -2.4 -3.4 -3.6 -0.8L-6.4 -1.4C-8 -4.4 -7.6 -7.6 -5.6 -10Z" fill="#e8901a"/><path d="M-6.6 -0.8L-3.4 -0.2L-1.4 9.6L-3.6 10.4Z" fill="#4a4a4a"/><path d="M4.6 -10.4L6.8 -4.4L3.4 9.6L0.2 9L2.6 -4.8Z" fill="#e8901a"/><path d="M0.2 4L3.8 4.8L3 9.8L-0.2 9.2Z" fill="#3a3a3a"/><use href="#tri"/></g><g transform="translate(77.3 605)"><rect x="-15.8" y="-15.6" width="31.6" height="31" fill="#000"/><rect x="-15.8" y="12" width="31.6" height="3.4" fill="#f25a0a"/><rect x="-15.8" y="-2.4" width="31.6" height="1.1" fill="#fff"/><path d="M-9.6 9.4V-10.6H-6L0 -1.4L6 -10.6H9.6V9.4H6V-4.6L0 4.4L-6 -4.6V9.4Z" fill="#fff"/><use href="#tri"/></g><g transform="translate(77.3 649)"><use href="#boxic"/><use href="#tri"/></g><g transform="translate(77.3 693)"><rect x="-15.8" y="-15.6" width="31.6" height="31" fill="#000"/><rect x="-15.8" y="12" width="31.6" height="3.4" fill="#f25a0a"/><rect x="-15.8" y="-2.4" width="31.6" height="1.1" fill="#fff"/><path d="M7.6 -5.4C6 -9.4 2.6 -10.8 -0.4 -10.8C-5.8 -10.8 -9 -6.6 -9 -0.6C-9 5.4 -5.8 9.6 -0.4 9.6C2.4 9.6 4.4 8.6 5.6 7.2L6.2 9.2H8.6V-1.6H-0.2V1.8H5V3.4C4 5.2 2.2 6.2 -0.2 6.2C-3.4 6.2 -5 3.4 -5 -0.6C-5 -4.6 -3.4 -7.4 -0.2 -7.4C1.8 -7.4 3.2 -6.4 3.8 -4.6Z" fill="#fff"/><use href="#tri"/></g><g transform="translate(77.3 737)"><rect x="-16" y="-15" width="5" height="9" fill="#7ac31a" stroke="#4e8a0c" stroke-width="0.6"/><rect x="-10.4" y="-13.6" width="5.6" height="6.4" fill="#7ac31a" stroke="#4e8a0c" stroke-width="0.6"/><rect x="-4.6" y="-15" width="9" height="9" fill="#7ac31a" stroke="#4e8a0c" stroke-width="0.6"/><rect x="4.8" y="-13.6" width="5.6" height="6.4" fill="#7ac31a" stroke="#4e8a0c" stroke-width="0.6"/><rect x="11" y="-15" width="5" height="9" fill="#7ac31a" stroke="#4e8a0c" stroke-width="0.6"/><rect x="-2.4" y="-6" width="4.8" height="17" fill="#7ac31a" stroke="#4e8a0c" stroke-width="0.6"/><rect x="-1" y="-6" width="1.4" height="17" fill="#b4ee5a"/><rect x="-4.6" y="11" width="9" height="5" fill="#7ac31a" stroke="#4e8a0c" stroke-width="0.6"/><rect x="-15" y="-13" width="30" height="1.4" fill="#b4ee5a" opacity="0.6"/><use href="#tri"/></g><g transform="translate(-7.8 0.6)"><path d="M82.6 796.4L85.6 800L88.6 796.4V799.6L85.6 803.2L82.6 799.6Z" fill="#7c7c7c"/><path d="M82.6 800.8L85.6 804.4L88.6 800.8V803.4L85.6 807L82.6 803.4Z" fill="#7c7c7c"/></g></svg>
</body></html>
